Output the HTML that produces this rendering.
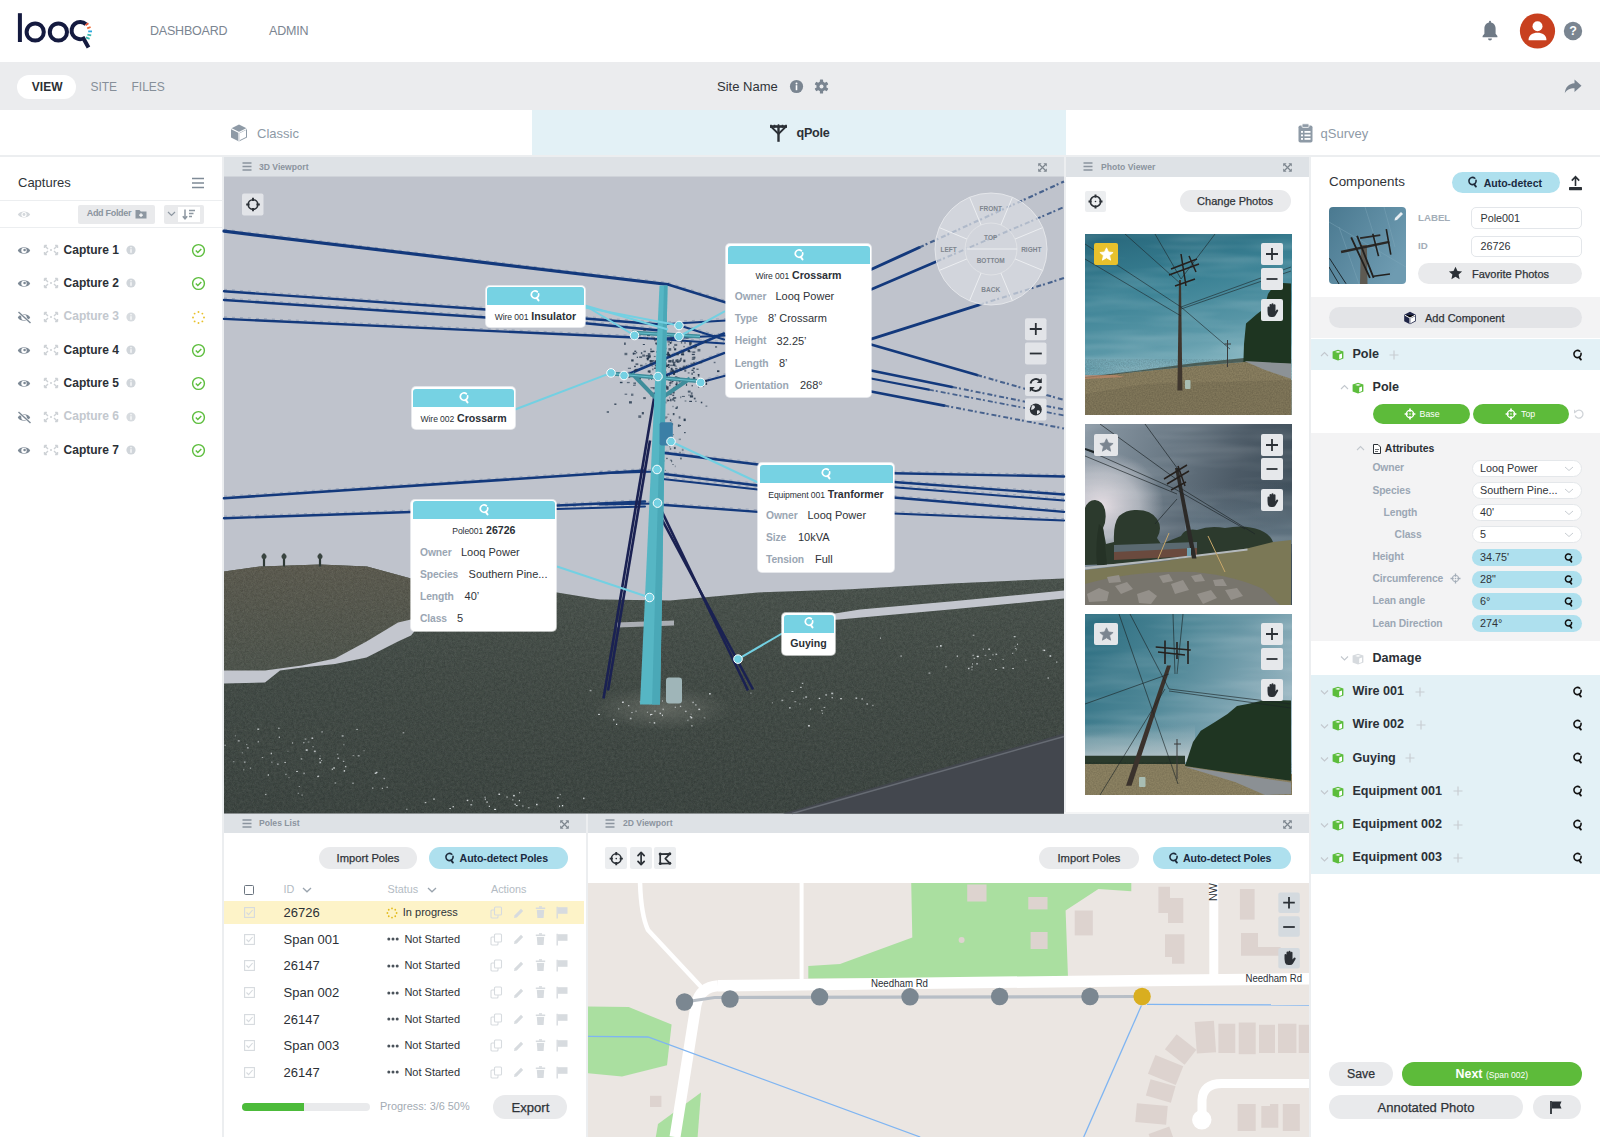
<!DOCTYPE html>
<html><head><meta charset="utf-8">
<style>
*{box-sizing:border-box;margin:0;padding:0}
html,body{width:1600px;height:1137px;overflow:hidden;background:#fff;font-family:"Liberation Sans",sans-serif;color:#2f3338}
.a{position:absolute}
.t{position:absolute;white-space:nowrap;line-height:1}
svg{position:absolute;overflow:visible}
</style></head>
<body>
<div class="a" style="left:0px;top:0px;width:1600px;height:62px;background:#fff;"></div>
<svg style="left:10px;top:8px;" width="90" height="45" viewBox="0 0 90 45">
<rect x="7.9" y="5.2" width="4" height="28.8" fill="#141a3f"/>
<circle cx="25.2" cy="24" r="8.6" fill="none" stroke="#141a3f" stroke-width="4"/>
<circle cx="48.4" cy="24" r="8.6" fill="none" stroke="#141a3f" stroke-width="4"/>
<path d="M76 16.2 A8.6 8.6 0 1 0 73.5 30.5 L78.5 39.5" fill="none" stroke="#141a3f" stroke-width="4"/>
<path d="M75.6 17.2 L78.4 15.2" stroke="#e8563a" stroke-width="1.8"/>
<path d="M77.2 20.4 L80.6 19" stroke="#f06a35" stroke-width="1.8"/>
<path d="M78.2 23.4 L82 23.4" stroke="#2aa7e0" stroke-width="1.8"/>
<path d="M77.4 26.6 L81.2 27.4" stroke="#3bb8b0" stroke-width="1.8"/>
<path d="M76 29.4 L79.6 30.8" stroke="#3bb8b0" stroke-width="1.8"/>
</svg>
<div class="t" style="left:150px;top:24.88px;font-size:12.5px;color:#7b8591;letter-spacing:-0.2px;">DASHBOARD</div>
<div class="t" style="left:269px;top:24.88px;font-size:12.5px;color:#7b8591;letter-spacing:-0.2px;">ADMIN</div>
<svg style="left:1480px;top:20px;" width="20" height="22" viewBox="0 0 20 22"><path d="M10 2.5c-3.6 0-5.6 2.7-5.6 6v5.2L2.6 16v1.2h14.8V16l-1.8-2.3V8.5c0-3.3-2-6-5.6-6z" fill="#6f7a86"/><path d="M8 18.6a2 2 0 0 0 4 0z" fill="#6f7a86"/><rect x="9" y="0.8" width="2" height="2.5" rx="1" fill="#6f7a86"/></svg>
<svg style="left:1519px;top:13px;" width="38" height="38" viewBox="0 0 38 38"><circle cx="18.5" cy="18" r="17.6" fill="#c8401f"/><circle cx="18.5" cy="13.2" r="5" fill="#fff"/><path d="M9.6 26.5c0-4.4 4-6.8 8.9-6.8s8.9 2.4 8.9 6.8v0.8H9.6z" fill="#fff"/></svg>
<svg style="left:1563px;top:21px;" width="20" height="20" viewBox="0 0 20 20"><circle cx="10" cy="10" r="9.2" fill="#7a8591"/><text x="10" y="14.3" font-family="Liberation Sans" font-weight="bold" font-size="12.5" fill="#fff" text-anchor="middle">?</text></svg>
<div class="a" style="left:0px;top:62px;width:1600px;height:48px;background:#ebecee;"></div>
<div class="a" style="left:17.4px;top:74.9px;width:59px;height:24px;background:#fff;border-radius:12px"></div>
<div class="t" style="left:31.8px;top:80.60px;font-size:12px;color:#2c3035;font-weight:bold;">VIEW</div>
<div class="t" style="left:90.4px;top:80.60px;font-size:12px;color:#868f99;">SITE</div>
<div class="t" style="left:131.5px;top:80.60px;font-size:12px;color:#868f99;">FILES</div>
<div class="t" style="left:717px;top:79.65px;font-size:13px;color:#2f3338;">Site Name</div>
<svg style="left:789px;top:79px;" width="15" height="15" viewBox="0 0 15 15"><circle cx="7.5" cy="7.5" r="6.6" fill="#7a8591"/><circle cx="7.5" cy="4.4" r="1" fill="#fff"/><rect x="6.7" y="6.2" width="1.6" height="5" fill="#fff"/></svg>
<svg style="left:813px;top:78px;" width="17" height="17" viewBox="0 0 17 17"><g transform="translate(8.5 8.5)" fill="#7a8591"><circle r="5"/><rect x="-1.6" y="-7" width="3.2" height="3.4" rx="0.6" transform="rotate(0)"/><rect x="-1.6" y="-7" width="3.2" height="3.4" rx="0.6" transform="rotate(60)"/><rect x="-1.6" y="-7" width="3.2" height="3.4" rx="0.6" transform="rotate(120)"/><rect x="-1.6" y="-7" width="3.2" height="3.4" rx="0.6" transform="rotate(180)"/><rect x="-1.6" y="-7" width="3.2" height="3.4" rx="0.6" transform="rotate(240)"/><rect x="-1.6" y="-7" width="3.2" height="3.4" rx="0.6" transform="rotate(300)"/><circle r="2" fill="#ebecee"/></g></svg>
<svg style="left:1563px;top:76px;" width="20" height="20" viewBox="0 0 20 20"><path d="M11.5 3.5 L18.5 9.8 L11.5 16 V12.2 C6.5 12.2 3.6 13.8 1.8 17.2 C2.4 11.2 5.6 7.6 11.5 7.2 Z" fill="#7a8591"/></svg>
<div class="a" style="left:0px;top:110px;width:1600px;height:45px;background:#fff;"></div>
<div class="a" style="left:532px;top:110px;width:534px;height:45px;background:#e3f1f6;"></div>
<svg style="left:229px;top:123px;" width="20" height="20" viewBox="0 0 20 20"><path d="M10 1.5 L18 5.5 V14.5 L10 18.5 L2 14.5 V5.5Z" fill="#8e9aa6"/><path d="M10 9.5 L18 5.5 M10 9.5 V18.5 M10 9.5 L2 5.5" stroke="#fff" stroke-width="1.2"/><path d="M10.6 10.3 L17 7.1 V14 L10.6 17.2Z" fill="#fff"/></svg>
<div class="t" style="left:257px;top:127.45px;font-size:13px;color:#8e9aa6;">Classic</div>
<svg style="left:768px;top:123px;" width="21" height="20" viewBox="0 0 21 20"><path d="M2 3.5 H19" stroke="#2b3036" stroke-width="2.6"/><path d="M3 1.8 v3 M6.5 1.8 v3 M14.5 1.8 v3 M18 1.8 v3 M10.5 1.2 v3" stroke="#2b3036" stroke-width="1.6"/><path d="M3.5 4 L10.5 11 L17.5 4" fill="none" stroke="#2b3036" stroke-width="1.8"/><path d="M10.5 3 V18.8" stroke="#2b3036" stroke-width="2.4"/></svg>
<div class="t" style="left:796.5px;top:126.79px;font-size:12.6px;color:#2b3036;font-weight:bold;letter-spacing:-0.25px;">qPole</div>
<svg style="left:1297px;top:123px;" width="17" height="20" viewBox="0 0 17 20"><rect x="1.5" y="2.5" width="14" height="17" rx="1.8" fill="#8e9aa6"/><rect x="5" y="0.8" width="7" height="3.6" rx="1" fill="#8e9aa6" stroke="#fff" stroke-width="0.8"/><g fill="#fff"><rect x="4" y="8" width="2" height="1.8"/><rect x="7.5" y="8" width="6" height="1.8"/><rect x="4" y="11.5" width="2" height="1.8"/><rect x="7.5" y="11.5" width="6" height="1.8"/><rect x="4" y="15" width="2" height="1.8"/><rect x="7.5" y="15" width="6" height="1.8"/></g></svg>
<div class="t" style="left:1320.5px;top:127.45px;font-size:13px;color:#8e9aa6;">qSurvey</div>
<div class="a" style="left:0px;top:155px;width:1600px;height:2px;background:#eceef0;"></div>
<div class="a" style="left:222px;top:155px;width:2px;height:982px;background:#eceef0;"></div>
<div class="t" style="left:18px;top:176.45px;font-size:13px;color:#2f3338;">Captures</div>
<svg style="left:191px;top:177px;" width="14" height="12" viewBox="0 0 14 12"><path d="M1 1.5H13M1 6H13M1 10.5H13" stroke="#7f8b97" stroke-width="1.6"/></svg>
<div class="a" style="left:0px;top:200px;width:222px;height:1px;background:#eceef0;"></div>
<svg style="left:17px;top:209px;" width="14" height="11" viewBox="0 0 14 11"><path d="M0.8 5.5 C3 1.5 11 1.5 13.2 5.5 C11 9.5 3 9.5 0.8 5.5Z" fill="#d3d7db"/><circle cx="7" cy="5.5" r="2.6" fill="#fff"/><circle cx="7" cy="5.5" r="1.4" fill="#d3d7db"/></svg>
<div class="a" style="left:78px;top:205px;width:77px;height:19px;background:#e9eaec;border-radius:2px"></div>
<div class="t" style="left:86.7px;top:209.35px;font-size:9px;color:#8a949e;font-weight:bold;letter-spacing:-0.3px;">Add Folder</div>
<svg style="left:135px;top:209px;" width="12" height="10" viewBox="0 0 12 10"><path d="M0.5 1 H4.5 L5.8 2.5 H11.5 V9.5 H0.5Z" fill="#8d97a1"/><path d="M6 4.2 V8 M4.1 6.1 H7.9" stroke="#fff" stroke-width="1.2"/></svg>
<div class="a" style="left:164.4px;top:205px;width:39.6px;height:19px;background:#e9eaec;border-radius:2px"></div>
<div class="a" style="left:177.6px;top:207.2px;width:22.2px;height:14.8px;background:#fff;"></div>
<svg style="left:167px;top:211px;" width="9" height="6" viewBox="0 0 9 6"><path d="M1 1 L4.5 4.5 L8 1" fill="none" stroke="#8d97a1" stroke-width="1.2"/></svg>
<svg style="left:182px;top:209px;" width="14" height="11" viewBox="0 0 14 11"><path d="M3 0.5 V9.5 M0.8 7.2 L3 9.8 L5.2 7.2" fill="none" stroke="#8d97a1" stroke-width="1.5"/><path d="M7 1.5 H13 M7 4.5 H11.5 M7 7.5 H10" stroke="#8d97a1" stroke-width="1.4"/></svg>
<div class="a" style="left:0px;top:227px;width:222px;height:1px;background:#eceef0;"></div>
<svg style="left:17px;top:245.0px;" width="14" height="11" viewBox="0 0 14 11"><path d="M0.8 5.5 C3 1.2 11 1.2 13.2 5.5 C11 9.8 3 9.8 0.8 5.5Z" fill="#7d8995"/><circle cx="7" cy="5.5" r="2.7" fill="#fff"/><circle cx="7.6" cy="5" r="1.3" fill="#7d8995"/></svg>
<svg style="left:43px;top:244.0px;" width="16" height="12" viewBox="0 0 16 12"><g stroke="#cdd1d5" stroke-width="1.4" fill="none"><path d="M1.5 1.5 L5 5 M14.5 1.5 L11 5 M1.5 10.5 L5 7 M14.5 10.5 L11 7"/><path d="M1.5 1.5 h2.4 M1.5 1.5 v2.4 M14.5 1.5 h-2.4 M14.5 1.5 v2.4 M1.5 10.5 h2.4 M1.5 10.5 v-2.4 M14.5 10.5 h-2.4 M14.5 10.5 v-2.4"/></g><circle cx="8" cy="6" r="1" fill="#cdd1d5"/></svg>
<div class="t" style="left:63.6px;top:243.70px;font-size:12px;color:#2b3036;font-weight:bold;">Capture 1</div>
<svg style="left:126px;top:245.0px;" width="10" height="10" viewBox="0 0 10 10"><circle cx="5" cy="5" r="4.6" fill="#d0d5da"/><rect x="4.4" y="4.2" width="1.2" height="3.6" fill="#fff"/><circle cx="5" cy="2.8" r="0.7" fill="#fff"/></svg>
<svg style="left:191px;top:243.0px;" width="15" height="15" viewBox="0 0 15 15"><circle cx="7.5" cy="7.5" r="5.9" fill="none" stroke="#5cbd3c" stroke-width="1.4"/><path d="M4.8 7.6 L6.8 9.6 L10.3 5.9" fill="none" stroke="#5cbd3c" stroke-width="1.4"/></svg>
<svg style="left:17px;top:278.3px;" width="14" height="11" viewBox="0 0 14 11"><path d="M0.8 5.5 C3 1.2 11 1.2 13.2 5.5 C11 9.8 3 9.8 0.8 5.5Z" fill="#7d8995"/><circle cx="7" cy="5.5" r="2.7" fill="#fff"/><circle cx="7.6" cy="5" r="1.3" fill="#7d8995"/></svg>
<svg style="left:43px;top:277.3px;" width="16" height="12" viewBox="0 0 16 12"><g stroke="#cdd1d5" stroke-width="1.4" fill="none"><path d="M1.5 1.5 L5 5 M14.5 1.5 L11 5 M1.5 10.5 L5 7 M14.5 10.5 L11 7"/><path d="M1.5 1.5 h2.4 M1.5 1.5 v2.4 M14.5 1.5 h-2.4 M14.5 1.5 v2.4 M1.5 10.5 h2.4 M1.5 10.5 v-2.4 M14.5 10.5 h-2.4 M14.5 10.5 v-2.4"/></g><circle cx="8" cy="6" r="1" fill="#cdd1d5"/></svg>
<div class="t" style="left:63.6px;top:277.00px;font-size:12px;color:#2b3036;font-weight:bold;">Capture 2</div>
<svg style="left:126px;top:278.3px;" width="10" height="10" viewBox="0 0 10 10"><circle cx="5" cy="5" r="4.6" fill="#d0d5da"/><rect x="4.4" y="4.2" width="1.2" height="3.6" fill="#fff"/><circle cx="5" cy="2.8" r="0.7" fill="#fff"/></svg>
<svg style="left:191px;top:276.3px;" width="15" height="15" viewBox="0 0 15 15"><circle cx="7.5" cy="7.5" r="5.9" fill="none" stroke="#5cbd3c" stroke-width="1.4"/><path d="M4.8 7.6 L6.8 9.6 L10.3 5.9" fill="none" stroke="#5cbd3c" stroke-width="1.4"/></svg>
<svg style="left:17px;top:310.6px;" width="15" height="13" viewBox="0 0 15 13"><path d="M0.8 6.5 C3 2.2 11 2.2 13.2 6.5 C11 10.8 3 10.8 0.8 6.5Z" fill="#7d8995"/><circle cx="7" cy="6.5" r="2.7" fill="#fff"/><path d="M1.5 1 L13.5 12" stroke="#fff" stroke-width="2.6"/><path d="M1.5 1 L13.5 12" stroke="#7d8995" stroke-width="1.4"/></svg>
<svg style="left:43px;top:310.6px;" width="16" height="12" viewBox="0 0 16 12"><g stroke="#cdd1d5" stroke-width="1.4" fill="none"><path d="M1.5 1.5 L5 5 M14.5 1.5 L11 5 M1.5 10.5 L5 7 M14.5 10.5 L11 7"/><path d="M1.5 1.5 h2.4 M1.5 1.5 v2.4 M14.5 1.5 h-2.4 M14.5 1.5 v2.4 M1.5 10.5 h2.4 M1.5 10.5 v-2.4 M14.5 10.5 h-2.4 M14.5 10.5 v-2.4"/></g><circle cx="8" cy="6" r="1" fill="#cdd1d5"/></svg>
<div class="t" style="left:63.6px;top:310.30px;font-size:12px;color:#c3c8ce;font-weight:bold;">Capture 3</div>
<svg style="left:126px;top:311.6px;" width="10" height="10" viewBox="0 0 10 10"><circle cx="5" cy="5" r="4.6" fill="#d7dbdf"/><rect x="4.4" y="4.2" width="1.2" height="3.6" fill="#fff"/><circle cx="5" cy="2.8" r="0.7" fill="#fff"/></svg>
<svg style="left:191px;top:309.6px;" width="15" height="15" viewBox="0 0 15 15"><circle cx="13.00" cy="7.50" r="0.95" fill="#e8c12c"/><circle cx="11.39" cy="11.39" r="0.95" fill="#e8c12c"/><circle cx="7.50" cy="13.00" r="0.95" fill="#e8c12c"/><circle cx="3.62" cy="11.39" r="0.95" fill="#e8c12c"/><circle cx="2.00" cy="7.51" r="0.95" fill="#e8c12c"/><circle cx="3.60" cy="3.62" r="0.95" fill="#e8c12c"/><circle cx="7.49" cy="2.00" r="0.95" fill="#e8c12c"/><circle cx="11.38" cy="3.60" r="0.95" fill="#e8c12c"/></svg>
<svg style="left:17px;top:344.9px;" width="14" height="11" viewBox="0 0 14 11"><path d="M0.8 5.5 C3 1.2 11 1.2 13.2 5.5 C11 9.8 3 9.8 0.8 5.5Z" fill="#7d8995"/><circle cx="7" cy="5.5" r="2.7" fill="#fff"/><circle cx="7.6" cy="5" r="1.3" fill="#7d8995"/></svg>
<svg style="left:43px;top:343.9px;" width="16" height="12" viewBox="0 0 16 12"><g stroke="#cdd1d5" stroke-width="1.4" fill="none"><path d="M1.5 1.5 L5 5 M14.5 1.5 L11 5 M1.5 10.5 L5 7 M14.5 10.5 L11 7"/><path d="M1.5 1.5 h2.4 M1.5 1.5 v2.4 M14.5 1.5 h-2.4 M14.5 1.5 v2.4 M1.5 10.5 h2.4 M1.5 10.5 v-2.4 M14.5 10.5 h-2.4 M14.5 10.5 v-2.4"/></g><circle cx="8" cy="6" r="1" fill="#cdd1d5"/></svg>
<div class="t" style="left:63.6px;top:343.60px;font-size:12px;color:#2b3036;font-weight:bold;">Capture 4</div>
<svg style="left:126px;top:344.9px;" width="10" height="10" viewBox="0 0 10 10"><circle cx="5" cy="5" r="4.6" fill="#d0d5da"/><rect x="4.4" y="4.2" width="1.2" height="3.6" fill="#fff"/><circle cx="5" cy="2.8" r="0.7" fill="#fff"/></svg>
<svg style="left:191px;top:342.9px;" width="15" height="15" viewBox="0 0 15 15"><circle cx="7.5" cy="7.5" r="5.9" fill="none" stroke="#5cbd3c" stroke-width="1.4"/><path d="M4.8 7.6 L6.8 9.6 L10.3 5.9" fill="none" stroke="#5cbd3c" stroke-width="1.4"/></svg>
<svg style="left:17px;top:378.2px;" width="14" height="11" viewBox="0 0 14 11"><path d="M0.8 5.5 C3 1.2 11 1.2 13.2 5.5 C11 9.8 3 9.8 0.8 5.5Z" fill="#7d8995"/><circle cx="7" cy="5.5" r="2.7" fill="#fff"/><circle cx="7.6" cy="5" r="1.3" fill="#7d8995"/></svg>
<svg style="left:43px;top:377.2px;" width="16" height="12" viewBox="0 0 16 12"><g stroke="#cdd1d5" stroke-width="1.4" fill="none"><path d="M1.5 1.5 L5 5 M14.5 1.5 L11 5 M1.5 10.5 L5 7 M14.5 10.5 L11 7"/><path d="M1.5 1.5 h2.4 M1.5 1.5 v2.4 M14.5 1.5 h-2.4 M14.5 1.5 v2.4 M1.5 10.5 h2.4 M1.5 10.5 v-2.4 M14.5 10.5 h-2.4 M14.5 10.5 v-2.4"/></g><circle cx="8" cy="6" r="1" fill="#cdd1d5"/></svg>
<div class="t" style="left:63.6px;top:376.90px;font-size:12px;color:#2b3036;font-weight:bold;">Capture 5</div>
<svg style="left:126px;top:378.2px;" width="10" height="10" viewBox="0 0 10 10"><circle cx="5" cy="5" r="4.6" fill="#d0d5da"/><rect x="4.4" y="4.2" width="1.2" height="3.6" fill="#fff"/><circle cx="5" cy="2.8" r="0.7" fill="#fff"/></svg>
<svg style="left:191px;top:376.2px;" width="15" height="15" viewBox="0 0 15 15"><circle cx="7.5" cy="7.5" r="5.9" fill="none" stroke="#5cbd3c" stroke-width="1.4"/><path d="M4.8 7.6 L6.8 9.6 L10.3 5.9" fill="none" stroke="#5cbd3c" stroke-width="1.4"/></svg>
<svg style="left:17px;top:410.5px;" width="15" height="13" viewBox="0 0 15 13"><path d="M0.8 6.5 C3 2.2 11 2.2 13.2 6.5 C11 10.8 3 10.8 0.8 6.5Z" fill="#7d8995"/><circle cx="7" cy="6.5" r="2.7" fill="#fff"/><path d="M1.5 1 L13.5 12" stroke="#fff" stroke-width="2.6"/><path d="M1.5 1 L13.5 12" stroke="#7d8995" stroke-width="1.4"/></svg>
<svg style="left:43px;top:410.5px;" width="16" height="12" viewBox="0 0 16 12"><g stroke="#cdd1d5" stroke-width="1.4" fill="none"><path d="M1.5 1.5 L5 5 M14.5 1.5 L11 5 M1.5 10.5 L5 7 M14.5 10.5 L11 7"/><path d="M1.5 1.5 h2.4 M1.5 1.5 v2.4 M14.5 1.5 h-2.4 M14.5 1.5 v2.4 M1.5 10.5 h2.4 M1.5 10.5 v-2.4 M14.5 10.5 h-2.4 M14.5 10.5 v-2.4"/></g><circle cx="8" cy="6" r="1" fill="#cdd1d5"/></svg>
<div class="t" style="left:63.6px;top:410.20px;font-size:12px;color:#c3c8ce;font-weight:bold;">Capture 6</div>
<svg style="left:126px;top:411.5px;" width="10" height="10" viewBox="0 0 10 10"><circle cx="5" cy="5" r="4.6" fill="#d7dbdf"/><rect x="4.4" y="4.2" width="1.2" height="3.6" fill="#fff"/><circle cx="5" cy="2.8" r="0.7" fill="#fff"/></svg>
<svg style="left:191px;top:409.5px;" width="15" height="15" viewBox="0 0 15 15"><circle cx="7.5" cy="7.5" r="5.9" fill="none" stroke="#5cbd3c" stroke-width="1.4"/><path d="M4.8 7.6 L6.8 9.6 L10.3 5.9" fill="none" stroke="#5cbd3c" stroke-width="1.4"/></svg>
<svg style="left:17px;top:444.79999999999995px;" width="14" height="11" viewBox="0 0 14 11"><path d="M0.8 5.5 C3 1.2 11 1.2 13.2 5.5 C11 9.8 3 9.8 0.8 5.5Z" fill="#7d8995"/><circle cx="7" cy="5.5" r="2.7" fill="#fff"/><circle cx="7.6" cy="5" r="1.3" fill="#7d8995"/></svg>
<svg style="left:43px;top:443.79999999999995px;" width="16" height="12" viewBox="0 0 16 12"><g stroke="#cdd1d5" stroke-width="1.4" fill="none"><path d="M1.5 1.5 L5 5 M14.5 1.5 L11 5 M1.5 10.5 L5 7 M14.5 10.5 L11 7"/><path d="M1.5 1.5 h2.4 M1.5 1.5 v2.4 M14.5 1.5 h-2.4 M14.5 1.5 v2.4 M1.5 10.5 h2.4 M1.5 10.5 v-2.4 M14.5 10.5 h-2.4 M14.5 10.5 v-2.4"/></g><circle cx="8" cy="6" r="1" fill="#cdd1d5"/></svg>
<div class="t" style="left:63.6px;top:443.50px;font-size:12px;color:#2b3036;font-weight:bold;">Capture 7</div>
<svg style="left:126px;top:444.79999999999995px;" width="10" height="10" viewBox="0 0 10 10"><circle cx="5" cy="5" r="4.6" fill="#d0d5da"/><rect x="4.4" y="4.2" width="1.2" height="3.6" fill="#fff"/><circle cx="5" cy="2.8" r="0.7" fill="#fff"/></svg>
<svg style="left:191px;top:442.79999999999995px;" width="15" height="15" viewBox="0 0 15 15"><circle cx="7.5" cy="7.5" r="5.9" fill="none" stroke="#5cbd3c" stroke-width="1.4"/><path d="M4.8 7.6 L6.8 9.6 L10.3 5.9" fill="none" stroke="#5cbd3c" stroke-width="1.4"/></svg>
<div class="a" style="left:224px;top:157px;width:840px;height:19.5px;background:#dee2e6;"></div>
<svg style="left:242px;top:162px;" width="10" height="9" viewBox="0 0 10 9"><path d="M0.5 1H9.5M0.5 4.5H9.5M0.5 8H9.5" stroke="#8b949e" stroke-width="1.3"/></svg>
<div class="t" style="left:259px;top:162.99px;font-size:8.6px;color:#8b949e;font-weight:bold;">3D Viewport</div>
<svg style="left:1037.5px;top:163px;" width="9" height="9" viewBox="0 0 9 9"><g stroke="#7d868f" stroke-width="1.2" fill="none"><path d="M1.5 1.5 L7.5 7.5 M7.5 1.5 L1.5 7.5"/></g><g fill="#7d868f"><path d="M0.2 0.2 h3.4 l-3.4 3.4z"/><path d="M8.8 0.2 h-3.4 l3.4 3.4z"/><path d="M0.2 8.8 h3.4 l-3.4 -3.4z"/><path d="M8.8 8.8 h-3.4 l3.4 -3.4z"/></g></svg>
<div class="a" style="left:1064px;top:155px;width:2px;height:658px;background:#eceef0;"></div>
<div class="a" style="left:1066px;top:157px;width:243px;height:19.5px;background:#dee2e6;"></div>
<svg style="left:1083px;top:162px;" width="10" height="9" viewBox="0 0 10 9"><path d="M0.5 1H9.5M0.5 4.5H9.5M0.5 8H9.5" stroke="#8b949e" stroke-width="1.3"/></svg>
<div class="t" style="left:1101px;top:162.99px;font-size:8.6px;color:#8b949e;font-weight:bold;">Photo Viewer</div>
<svg style="left:1282.5px;top:163px;" width="9" height="9" viewBox="0 0 9 9"><g stroke="#7d868f" stroke-width="1.2" fill="none"><path d="M1.5 1.5 L7.5 7.5 M7.5 1.5 L1.5 7.5"/></g><g fill="#7d868f"><path d="M0.2 0.2 h3.4 l-3.4 3.4z"/><path d="M8.8 0.2 h-3.4 l3.4 3.4z"/><path d="M0.2 8.8 h3.4 l-3.4 -3.4z"/><path d="M8.8 8.8 h-3.4 l3.4 -3.4z"/></g></svg>
<div class="a" style="left:1309px;top:155px;width:2px;height:982px;background:#eceef0;"></div>
<div class="a" style="left:224px;top:812px;width:1085px;height:1.5px;background:#f4f5f6;"></div>
<div class="a" style="left:224px;top:813.5px;width:362px;height:19.5px;background:#dee2e6;"></div>
<svg style="left:242px;top:818.5px;" width="10" height="9" viewBox="0 0 10 9"><path d="M0.5 1H9.5M0.5 4.5H9.5M0.5 8H9.5" stroke="#8b949e" stroke-width="1.3"/></svg>
<div class="t" style="left:259px;top:819.49px;font-size:8.6px;color:#8b949e;font-weight:bold;">Poles List</div>
<svg style="left:559.5px;top:819.5px;" width="9" height="9" viewBox="0 0 9 9"><g stroke="#7d868f" stroke-width="1.2" fill="none"><path d="M1.5 1.5 L7.5 7.5 M7.5 1.5 L1.5 7.5"/></g><g fill="#7d868f"><path d="M0.2 0.2 h3.4 l-3.4 3.4z"/><path d="M8.8 0.2 h-3.4 l3.4 3.4z"/><path d="M0.2 8.8 h3.4 l-3.4 -3.4z"/><path d="M8.8 8.8 h-3.4 l3.4 -3.4z"/></g></svg>
<div class="a" style="left:586px;top:812px;width:2px;height:325px;background:#eceef0;"></div>
<div class="a" style="left:588px;top:813.5px;width:721px;height:19.5px;background:#dee2e6;"></div>
<svg style="left:605px;top:818.5px;" width="10" height="9" viewBox="0 0 10 9"><path d="M0.5 1H9.5M0.5 4.5H9.5M0.5 8H9.5" stroke="#8b949e" stroke-width="1.3"/></svg>
<div class="t" style="left:623px;top:819.49px;font-size:8.6px;color:#8b949e;font-weight:bold;">2D Viewport</div>
<svg style="left:1282.5px;top:819.5px;" width="9" height="9" viewBox="0 0 9 9"><g stroke="#7d868f" stroke-width="1.2" fill="none"><path d="M1.5 1.5 L7.5 7.5 M7.5 1.5 L1.5 7.5"/></g><g fill="#7d868f"><path d="M0.2 0.2 h3.4 l-3.4 3.4z"/><path d="M8.8 0.2 h-3.4 l3.4 3.4z"/><path d="M0.2 8.8 h3.4 l-3.4 -3.4z"/><path d="M8.8 8.8 h-3.4 l3.4 -3.4z"/></g></svg>
<div class="a" style="left:1085px;top:190.7px;width:21px;height:21px;background:#eceef0;border-radius:2px"></div>
<svg style="left:1085px;top:190.7px;" width="21" height="21" viewBox="0 0 21 21"><circle cx="10.5" cy="10.5" r="5.2" fill="none" stroke="#2b3036" stroke-width="1.6"/><path d="M10.5 3.5 v3.2 M10.5 17.5 v-3.2 M3.5 10.5 h3.2 M17.5 10.5 h-3.2" stroke="#2b3036" stroke-width="1.9000000000000001"/><circle cx="10.5" cy="10.5" r="0.8" fill="#2b3036"/></svg>
<div class="a" style="left:1179.6px;top:190px;width:111px;height:21.5px;background:#e9eaec;border-radius:11px"></div>
<div class="t" style="left:1179.50px;width:111px;text-align:center;top:195.85px;font-size:11px;color:#2f3338;-webkit-text-stroke:0.25px currentColor">Change Photos</div>
<div class="t" style="left:1329px;top:175.21px;font-size:13.4px;color:#2f3338;">Components</div>
<div class="a" style="left:1452px;top:172px;width:108px;height:21px;background:#aee0ee;border-radius:11px"></div>
<svg style="left:1466px;top:175px;" width="14" height="14" viewBox="0 0 14 14"><path d="M10.05 5.37 A3.6 3.6 0 1 1 8.81 3.24" fill="none" stroke="#1d2a3a" stroke-width="1.6" stroke-linecap="round"/><path d="M8.12 9.24 L9.92 11.58" stroke="#1d2a3a" stroke-width="1.9000000000000001" stroke-linecap="round"/></svg>
<div class="t" style="left:1483.7px;top:177.57px;font-size:10.5px;color:#1a2a40;font-weight:bold;">Auto-detect</div>
<svg style="left:1567px;top:174px;" width="17" height="17" viewBox="0 0 17 17"><path d="M8.5 12 V3 M4.8 6.6 L8.5 2.6 L12.2 6.6" fill="none" stroke="#2b3036" stroke-width="1.6"/><rect x="2" y="13" width="13" height="3.2" rx="0.6" fill="#2b3036"/></svg>
<svg style="left:1329px;top:207px;" width="77" height="77" viewBox="0 0 77 77"><defs><linearGradient id="th" x1="0" y1="0" x2="1" y2="0.6"><stop offset="0" stop-color="#4a7990"/><stop offset="1" stop-color="#6e9bb1"/></linearGradient><clipPath id="thc"><rect width="77" height="77" rx="4"/></clipPath></defs>
<g clip-path="url(#thc)"><rect width="77" height="77" fill="url(#th)"/>
<path d="M36 0 L52 50 M55 0 L66 40 M0 15 L77 60 M30 77 L10 20" stroke="#82a9bc" stroke-width="0.6" opacity="0.7"/>
<path d="M0.5 51.3 L17 76.7 M0 60 L10 77" stroke="#1e2a30" stroke-width="1"/>
<path d="M31.9 37.9 L37.9 37.9 L38.5 77 L31 77Z" fill="#5e5a52"/>
<path d="M12.1 45 L60.3 34.9" stroke="#2a2826" stroke-width="2.4"/>
<path d="M31.1 31.1 L51.3 28.1" stroke="#2a2826" stroke-width="1.8"/>
<path d="M22.2 30.4 L40.9 70.8 M28.1 28.9 L44.6 70.8" stroke="#22201e" stroke-width="1.8"/>
<path d="M57.3 22.2 L61.8 47.6 M43.8 26.7 L49.5 49.1" stroke="#22201e" stroke-width="1.6"/>
<path d="M44.6 69.3 L61 67" stroke="#22201e" stroke-width="1.4"/>
<path d="M66 11 L72 5 L74 7 L68 13 L65.5 13.5Z" fill="#e8eef2"/>
</g></svg>
<div class="t" style="left:1418px;top:213.35px;font-size:9.7px;color:#a3adb8;font-weight:bold;">LABEL</div>
<div class="a" style="left:1471px;top:207.4px;width:111px;height:21.4px;background:#fff;border:1px solid #e3e6ea;border-radius:5px"></div>
<div class="t" style="left:1480.5px;top:212.82px;font-size:10.8px;color:#2f3338;">Pole001</div>
<div class="t" style="left:1418px;top:241.35px;font-size:9.7px;color:#a3adb8;font-weight:bold;">ID</div>
<div class="a" style="left:1471px;top:235.5px;width:111px;height:21.4px;background:#fff;border:1px solid #e3e6ea;border-radius:5px"></div>
<div class="t" style="left:1480.5px;top:240.82px;font-size:10.8px;color:#2f3338;">26726</div>
<div class="a" style="left:1418px;top:262.8px;width:164px;height:21.4px;background:#e9eaec;border-radius:11px"></div>
<svg style="left:1448px;top:266px;" width="15" height="14" viewBox="0 0 15 14"><path d="M7.5 0.8 L9.5 5 L14.1 5.5 L10.6 8.6 L11.6 13.2 L7.5 10.8 L3.4 13.2 L4.4 8.6 L0.9 5.5 L5.5 5Z" fill="#2b3036"/></svg>
<div class="t" style="left:1472px;top:268.65px;font-size:11px;color:#2f3338;-webkit-text-stroke:0.25px currentColor">Favorite Photos</div>
<div class="a" style="left:1311px;top:297.4px;width:289px;height:40.6px;background:#f3f3f4;"></div>
<div class="a" style="left:1329px;top:307px;width:253px;height:21.4px;background:#e3e4e7;border-radius:11px"></div>
<svg style="left:1403px;top:311px;" width="14" height="14" viewBox="0 0 14 14"><path d="M7 0.8 L12.8 3.8 V10.2 L7 13.2 L1.2 10.2 V3.8Z" fill="#1f2547"/><path d="M1.8 4.2 L7 7 L12.2 4.2 M7 7 V12.6" stroke="#fff" stroke-width="1"/><path d="M7.6 7.6 L12 5.2 V9.8 L7.6 12.2Z" fill="#fff"/></svg>
<div class="t" style="left:1425px;top:312.85px;font-size:11px;color:#2f3338;-webkit-text-stroke:0.25px currentColor">Add Component</div>
<div class="a" style="left:1311px;top:338.6px;width:289px;height:31.7px;background:#e3f1f6;"></div>
<svg style="left:1319.5px;top:351.2px;" width="9" height="7" viewBox="0 0 9 7"><path d="M1 5 L4.5 1.5 L8 5" fill="none" stroke="#c3c8ce" stroke-width="1.1"/></svg>
<svg style="left:1332px;top:348.7px;" width="12" height="12" viewBox="0 0 12 12"><g transform="scale(1.0)"><path d="M0.6 2.6 L6 0.8 L11.4 2.6 V9.4 L6 11.6 L0.6 9.4Z" fill="#5cbd3c"/><path d="M3.2 3 L6 2.1 L8.8 3 L6 3.8Z" fill="#fff"/><path d="M7.2 5.6 L10 4.6 V9 L7.2 10.2Z" fill="#fff"/></g></svg>
<div class="t" style="left:1352.4px;top:347.79px;font-size:12.6px;color:#2b3036;font-weight:bold;">Pole</div>
<svg style="left:1388.6px;top:350px;" width="10" height="10" viewBox="0 0 10 10"><path d="M5 0.5 V9.5 M0.5 5 H9.5" stroke="#c8cdd2" stroke-width="1.2"/></svg>
<svg style="left:1572px;top:349px;" width="12" height="12" viewBox="0 0 12 12"><path d="M9.05 4.37 A3.6 3.6 0 1 1 7.81 2.24" fill="none" stroke="#111" stroke-width="1.6" stroke-linecap="round"/><path d="M7.12 8.24 L8.92 10.58" stroke="#111" stroke-width="1.9000000000000001" stroke-linecap="round"/></svg>
<div class="a" style="left:1311px;top:370.3px;width:289px;height:62.3px;background:#fff;"></div>
<svg style="left:1339.5px;top:384.2px;" width="9" height="7" viewBox="0 0 9 7"><path d="M1 5 L4.5 1.5 L8 5" fill="none" stroke="#c3c8ce" stroke-width="1.1"/></svg>
<svg style="left:1352px;top:382.2px;" width="12" height="12" viewBox="0 0 12 12"><g transform="scale(1.0)"><path d="M0.6 2.6 L6 0.8 L11.4 2.6 V9.4 L6 11.6 L0.6 9.4Z" fill="#5cbd3c"/><path d="M3.2 3 L6 2.1 L8.8 3 L6 3.8Z" fill="#fff"/><path d="M7.2 5.6 L10 4.6 V9 L7.2 10.2Z" fill="#fff"/></g></svg>
<div class="t" style="left:1372.5px;top:380.89px;font-size:12.6px;color:#2b3036;font-weight:bold;">Pole</div>
<div class="a" style="left:1373.4px;top:404px;width:96.2px;height:19.7px;background:#5dbb3a;border-radius:10px"></div>
<svg style="left:1403px;top:407px;" width="14" height="14" viewBox="0 0 14 14"><circle cx="7" cy="7" r="3.6" fill="none" stroke="#fff" stroke-width="1.4"/><path d="M7 1.5999999999999999 v3.2 M7 12.4 v-3.2 M1.5999999999999999 7 h3.2 M12.4 7 h-3.2" stroke="#fff" stroke-width="1.7"/><circle cx="7" cy="7" r="0.8" fill="#fff"/></svg>
<div class="t" style="left:1419.6px;top:409.52px;font-size:8.8px;color:#fff;">Base</div>
<div class="a" style="left:1472.6px;top:404px;width:96.2px;height:19.7px;background:#5dbb3a;border-radius:10px"></div>
<svg style="left:1504px;top:407px;" width="14" height="14" viewBox="0 0 14 14"><circle cx="7" cy="7" r="3.6" fill="none" stroke="#fff" stroke-width="1.4"/><path d="M7 1.5999999999999999 v3.2 M7 12.4 v-3.2 M1.5999999999999999 7 h3.2 M12.4 7 h-3.2" stroke="#fff" stroke-width="1.7"/><circle cx="7" cy="7" r="0.8" fill="#fff"/></svg>
<div class="t" style="left:1521px;top:409.52px;font-size:8.8px;color:#fff;">Top</div>
<svg style="left:1573px;top:408px;" width="11" height="12" viewBox="0 0 11 12"><path d="M3 3.5 A4 4 0 1 1 2.2 7.5" fill="none" stroke="#d0d4d8" stroke-width="1.3"/><path d="M1 1.5 L3.6 4 L1 5.5Z" fill="#d0d4d8"/></svg>
<div class="a" style="left:1311px;top:432.6px;width:289px;height:208.4px;background:#f3f3f4;"></div>
<svg style="left:1355.5px;top:444.7px;" width="9" height="7" viewBox="0 0 9 7"><path d="M1 5 L4.5 1.5 L8 5" fill="none" stroke="#c3c8ce" stroke-width="1.1"/></svg>
<svg style="left:1372px;top:444px;" width="10" height="10" viewBox="0 0 10 10"><path d="M1.5 0.5 H6 L8.5 3 V9.5 H1.5Z" fill="#fff" stroke="#2b3036" stroke-width="1"/><path d="M3 5.5 H7 M3 7.5 H6" stroke="#2b3036" stroke-width="0.7"/></svg>
<div class="t" style="left:1384.8px;top:443.07px;font-size:10.5px;color:#2b3036;font-weight:bold;">Attributes</div>
<div class="t" style="left:1372.4px;top:463.44px;font-size:10.3px;color:#9ba7b4;font-weight:bold;letter-spacing:-0.1px;">Owner</div>
<div class="a" style="left:1471.7px;top:460.0px;width:110px;height:17px;background:#fff;border:1px solid #e4e7ea;border-radius:9px"></div>
<div class="t" style="left:1480px;top:463.02px;font-size:10.8px;color:#2f3338;">Looq Power</div>
<svg style="left:1564px;top:466.0px;" width="10" height="6" viewBox="0 0 10 6"><path d="M1 1 L5 4.5 L9 1" fill="none" stroke="#c8cdd2" stroke-width="1"/></svg>
<div class="t" style="left:1372.4px;top:485.59px;font-size:10.3px;color:#9ba7b4;font-weight:bold;letter-spacing:-0.1px;">Species</div>
<div class="a" style="left:1471.7px;top:482.15px;width:110px;height:17px;background:#fff;border:1px solid #e4e7ea;border-radius:9px"></div>
<div class="t" style="left:1480px;top:485.17px;font-size:10.8px;color:#2f3338;">Southern Pine...</div>
<svg style="left:1564px;top:488.15px;" width="10" height="6" viewBox="0 0 10 6"><path d="M1 1 L5 4.5 L9 1" fill="none" stroke="#c8cdd2" stroke-width="1"/></svg>
<div class="t" style="left:1383.6px;top:507.75px;font-size:10.3px;color:#9ba7b4;font-weight:bold;letter-spacing:-0.1px;">Length</div>
<div class="a" style="left:1471.7px;top:504.3px;width:110px;height:17px;background:#fff;border:1px solid #e4e7ea;border-radius:9px"></div>
<div class="t" style="left:1480px;top:507.32px;font-size:10.8px;color:#2f3338;">40'</div>
<svg style="left:1564px;top:510.3px;" width="10" height="6" viewBox="0 0 10 6"><path d="M1 1 L5 4.5 L9 1" fill="none" stroke="#c8cdd2" stroke-width="1"/></svg>
<div class="t" style="left:1394.6px;top:529.90px;font-size:10.3px;color:#9ba7b4;font-weight:bold;letter-spacing:-0.1px;">Class</div>
<div class="a" style="left:1471.7px;top:526.45px;width:110px;height:17px;background:#fff;border:1px solid #e4e7ea;border-radius:9px"></div>
<div class="t" style="left:1480px;top:529.47px;font-size:10.8px;color:#2f3338;">5</div>
<svg style="left:1564px;top:532.45px;" width="10" height="6" viewBox="0 0 10 6"><path d="M1 1 L5 4.5 L9 1" fill="none" stroke="#c8cdd2" stroke-width="1"/></svg>
<div class="t" style="left:1372.4px;top:552.05px;font-size:10.3px;color:#9ba7b4;font-weight:bold;letter-spacing:-0.1px;">Height</div>
<div class="a" style="left:1471.7px;top:548.6px;width:110px;height:17px;background:#aee0ee;border-radius:9px"></div>
<div class="t" style="left:1480px;top:551.62px;font-size:10.8px;color:#2f3338;">34.75'</div>
<svg style="left:1563px;top:551.6px;" width="12" height="12" viewBox="0 0 12 12"><path d="M8.55 4.46 A3.1 3.1 0 1 1 7.49 2.63" fill="none" stroke="#111" stroke-width="1.5" stroke-linecap="round"/><path d="M6.89 7.79 L8.45 9.80" stroke="#111" stroke-width="1.8" stroke-linecap="round"/></svg>
<div class="t" style="left:1372.4px;top:574.20px;font-size:10.3px;color:#9ba7b4;font-weight:bold;letter-spacing:-0.1px;">Circumference</div>
<div class="a" style="left:1471.7px;top:570.75px;width:110px;height:17px;background:#aee0ee;border-radius:9px"></div>
<div class="t" style="left:1480px;top:573.77px;font-size:10.8px;color:#2f3338;">28"</div>
<svg style="left:1563px;top:573.75px;" width="12" height="12" viewBox="0 0 12 12"><path d="M8.55 4.46 A3.1 3.1 0 1 1 7.49 2.63" fill="none" stroke="#111" stroke-width="1.5" stroke-linecap="round"/><path d="M6.89 7.79 L8.45 9.80" stroke="#111" stroke-width="1.8" stroke-linecap="round"/></svg>
<div class="t" style="left:1372.4px;top:596.35px;font-size:10.3px;color:#9ba7b4;font-weight:bold;letter-spacing:-0.1px;">Lean angle</div>
<div class="a" style="left:1471.7px;top:592.9px;width:110px;height:17px;background:#aee0ee;border-radius:9px"></div>
<div class="t" style="left:1480px;top:595.92px;font-size:10.8px;color:#2f3338;">6°</div>
<svg style="left:1563px;top:595.9px;" width="12" height="12" viewBox="0 0 12 12"><path d="M8.55 4.46 A3.1 3.1 0 1 1 7.49 2.63" fill="none" stroke="#111" stroke-width="1.5" stroke-linecap="round"/><path d="M6.89 7.79 L8.45 9.80" stroke="#111" stroke-width="1.8" stroke-linecap="round"/></svg>
<div class="t" style="left:1372.4px;top:618.50px;font-size:10.3px;color:#9ba7b4;font-weight:bold;letter-spacing:-0.1px;">Lean Direction</div>
<div class="a" style="left:1471.7px;top:615.05px;width:110px;height:17px;background:#aee0ee;border-radius:9px"></div>
<div class="t" style="left:1480px;top:618.07px;font-size:10.8px;color:#2f3338;">274°</div>
<svg style="left:1563px;top:618.05px;" width="12" height="12" viewBox="0 0 12 12"><path d="M8.55 4.46 A3.1 3.1 0 1 1 7.49 2.63" fill="none" stroke="#111" stroke-width="1.5" stroke-linecap="round"/><path d="M6.89 7.79 L8.45 9.80" stroke="#111" stroke-width="1.8" stroke-linecap="round"/></svg>
<svg style="left:1450px;top:573px;" width="11" height="11" viewBox="0 0 11 11"><circle cx="5.5" cy="5.5" r="3.2" fill="none" stroke="#a3adb8" stroke-width="1"/><path d="M5.5 0.4999999999999998 v3.2 M5.5 10.5 v-3.2 M0.4999999999999998 5.5 h3.2 M10.5 5.5 h-3.2" stroke="#a3adb8" stroke-width="1.3"/><circle cx="5.5" cy="5.5" r="0.8" fill="#a3adb8"/></svg>
<div class="a" style="left:1311px;top:641px;width:289px;height:34.4px;background:#fff;"></div>
<svg style="left:1339.5px;top:655.2px;" width="9" height="7" viewBox="0 0 9 7"><path d="M1 1.5 L4.5 5 L8 1.5" fill="none" stroke="#c3c8ce" stroke-width="1.1"/></svg>
<svg style="left:1352px;top:652.7px;" width="12" height="12" viewBox="0 0 12 12"><g transform="scale(1.0)"><path d="M0.6 2.6 L6 0.8 L11.4 2.6 V9.4 L6 11.6 L0.6 9.4Z" fill="#d6dade"/><path d="M3.2 3 L6 2.1 L8.8 3 L6 3.8Z" fill="#fff"/><path d="M7.2 5.6 L10 4.6 V9 L7.2 10.2Z" fill="#fff"/></g></svg>
<div class="t" style="left:1372.5px;top:651.89px;font-size:12.6px;color:#2b3036;font-weight:bold;">Damage</div>
<div class="a" style="left:1311px;top:675.4px;width:289px;height:199.1px;background:#e3f1f6;"></div>
<svg style="left:1319.5px;top:689.3000000000001px;" width="9" height="7" viewBox="0 0 9 7"><path d="M1 1.5 L4.5 5 L8 1.5" fill="none" stroke="#c3c8ce" stroke-width="1.1"/></svg>
<svg style="left:1332px;top:685.8000000000001px;" width="12" height="12" viewBox="0 0 12 12"><g transform="scale(1.0)"><path d="M0.6 2.6 L6 0.8 L11.4 2.6 V9.4 L6 11.6 L0.6 9.4Z" fill="#5cbd3c"/><path d="M3.2 3 L6 2.1 L8.8 3 L6 3.8Z" fill="#fff"/><path d="M7.2 5.6 L10 4.6 V9 L7.2 10.2Z" fill="#fff"/></g></svg>
<div class="t" style="left:1352.4px;top:685.19px;font-size:12.6px;color:#2b3036;font-weight:bold;">Wire 001</div>
<svg style="left:1415.2px;top:686.6px;" width="10" height="10" viewBox="0 0 10 10"><path d="M5 0.5 V9.5 M0.5 5 H9.5" stroke="#c8cdd2" stroke-width="1.2"/></svg>
<svg style="left:1572px;top:685.6px;" width="12" height="12" viewBox="0 0 12 12"><path d="M9.05 4.37 A3.6 3.6 0 1 1 7.81 2.24" fill="none" stroke="#111" stroke-width="1.6" stroke-linecap="round"/><path d="M7.12 8.24 L8.92 10.58" stroke="#111" stroke-width="1.9000000000000001" stroke-linecap="round"/></svg>
<svg style="left:1319.5px;top:722.5500000000001px;" width="9" height="7" viewBox="0 0 9 7"><path d="M1 1.5 L4.5 5 L8 1.5" fill="none" stroke="#c3c8ce" stroke-width="1.1"/></svg>
<svg style="left:1332px;top:719.0500000000001px;" width="12" height="12" viewBox="0 0 12 12"><g transform="scale(1.0)"><path d="M0.6 2.6 L6 0.8 L11.4 2.6 V9.4 L6 11.6 L0.6 9.4Z" fill="#5cbd3c"/><path d="M3.2 3 L6 2.1 L8.8 3 L6 3.8Z" fill="#fff"/><path d="M7.2 5.6 L10 4.6 V9 L7.2 10.2Z" fill="#fff"/></g></svg>
<div class="t" style="left:1352.4px;top:718.44px;font-size:12.6px;color:#2b3036;font-weight:bold;">Wire 002</div>
<svg style="left:1415.9px;top:719.85px;" width="10" height="10" viewBox="0 0 10 10"><path d="M5 0.5 V9.5 M0.5 5 H9.5" stroke="#c8cdd2" stroke-width="1.2"/></svg>
<svg style="left:1572px;top:718.85px;" width="12" height="12" viewBox="0 0 12 12"><path d="M9.05 4.37 A3.6 3.6 0 1 1 7.81 2.24" fill="none" stroke="#111" stroke-width="1.6" stroke-linecap="round"/><path d="M7.12 8.24 L8.92 10.58" stroke="#111" stroke-width="1.9000000000000001" stroke-linecap="round"/></svg>
<svg style="left:1319.5px;top:755.8000000000001px;" width="9" height="7" viewBox="0 0 9 7"><path d="M1 1.5 L4.5 5 L8 1.5" fill="none" stroke="#c3c8ce" stroke-width="1.1"/></svg>
<svg style="left:1332px;top:752.3000000000001px;" width="12" height="12" viewBox="0 0 12 12"><g transform="scale(1.0)"><path d="M0.6 2.6 L6 0.8 L11.4 2.6 V9.4 L6 11.6 L0.6 9.4Z" fill="#5cbd3c"/><path d="M3.2 3 L6 2.1 L8.8 3 L6 3.8Z" fill="#fff"/><path d="M7.2 5.6 L10 4.6 V9 L7.2 10.2Z" fill="#fff"/></g></svg>
<div class="t" style="left:1352.4px;top:751.69px;font-size:12.6px;color:#2b3036;font-weight:bold;">Guying</div>
<svg style="left:1404.9px;top:753.1px;" width="10" height="10" viewBox="0 0 10 10"><path d="M5 0.5 V9.5 M0.5 5 H9.5" stroke="#c8cdd2" stroke-width="1.2"/></svg>
<svg style="left:1572px;top:752.1px;" width="12" height="12" viewBox="0 0 12 12"><path d="M9.05 4.37 A3.6 3.6 0 1 1 7.81 2.24" fill="none" stroke="#111" stroke-width="1.6" stroke-linecap="round"/><path d="M7.12 8.24 L8.92 10.58" stroke="#111" stroke-width="1.9000000000000001" stroke-linecap="round"/></svg>
<svg style="left:1319.5px;top:789.0500000000001px;" width="9" height="7" viewBox="0 0 9 7"><path d="M1 1.5 L4.5 5 L8 1.5" fill="none" stroke="#c3c8ce" stroke-width="1.1"/></svg>
<svg style="left:1332px;top:785.5500000000001px;" width="12" height="12" viewBox="0 0 12 12"><g transform="scale(1.0)"><path d="M0.6 2.6 L6 0.8 L11.4 2.6 V9.4 L6 11.6 L0.6 9.4Z" fill="#5cbd3c"/><path d="M3.2 3 L6 2.1 L8.8 3 L6 3.8Z" fill="#fff"/><path d="M7.2 5.6 L10 4.6 V9 L7.2 10.2Z" fill="#fff"/></g></svg>
<div class="t" style="left:1352.4px;top:784.94px;font-size:12.6px;color:#2b3036;font-weight:bold;">Equipment 001</div>
<svg style="left:1452.9px;top:786.35px;" width="10" height="10" viewBox="0 0 10 10"><path d="M5 0.5 V9.5 M0.5 5 H9.5" stroke="#c8cdd2" stroke-width="1.2"/></svg>
<svg style="left:1572px;top:785.35px;" width="12" height="12" viewBox="0 0 12 12"><path d="M9.05 4.37 A3.6 3.6 0 1 1 7.81 2.24" fill="none" stroke="#111" stroke-width="1.6" stroke-linecap="round"/><path d="M7.12 8.24 L8.92 10.58" stroke="#111" stroke-width="1.9000000000000001" stroke-linecap="round"/></svg>
<svg style="left:1319.5px;top:822.3000000000001px;" width="9" height="7" viewBox="0 0 9 7"><path d="M1 1.5 L4.5 5 L8 1.5" fill="none" stroke="#c3c8ce" stroke-width="1.1"/></svg>
<svg style="left:1332px;top:818.8000000000001px;" width="12" height="12" viewBox="0 0 12 12"><g transform="scale(1.0)"><path d="M0.6 2.6 L6 0.8 L11.4 2.6 V9.4 L6 11.6 L0.6 9.4Z" fill="#5cbd3c"/><path d="M3.2 3 L6 2.1 L8.8 3 L6 3.8Z" fill="#fff"/><path d="M7.2 5.6 L10 4.6 V9 L7.2 10.2Z" fill="#fff"/></g></svg>
<div class="t" style="left:1352.4px;top:818.19px;font-size:12.6px;color:#2b3036;font-weight:bold;">Equipment 002</div>
<svg style="left:1452.9px;top:819.6px;" width="10" height="10" viewBox="0 0 10 10"><path d="M5 0.5 V9.5 M0.5 5 H9.5" stroke="#c8cdd2" stroke-width="1.2"/></svg>
<svg style="left:1572px;top:818.6px;" width="12" height="12" viewBox="0 0 12 12"><path d="M9.05 4.37 A3.6 3.6 0 1 1 7.81 2.24" fill="none" stroke="#111" stroke-width="1.6" stroke-linecap="round"/><path d="M7.12 8.24 L8.92 10.58" stroke="#111" stroke-width="1.9000000000000001" stroke-linecap="round"/></svg>
<svg style="left:1319.5px;top:855.5500000000001px;" width="9" height="7" viewBox="0 0 9 7"><path d="M1 1.5 L4.5 5 L8 1.5" fill="none" stroke="#c3c8ce" stroke-width="1.1"/></svg>
<svg style="left:1332px;top:852.0500000000001px;" width="12" height="12" viewBox="0 0 12 12"><g transform="scale(1.0)"><path d="M0.6 2.6 L6 0.8 L11.4 2.6 V9.4 L6 11.6 L0.6 9.4Z" fill="#5cbd3c"/><path d="M3.2 3 L6 2.1 L8.8 3 L6 3.8Z" fill="#fff"/><path d="M7.2 5.6 L10 4.6 V9 L7.2 10.2Z" fill="#fff"/></g></svg>
<div class="t" style="left:1352.4px;top:851.44px;font-size:12.6px;color:#2b3036;font-weight:bold;">Equipment 003</div>
<svg style="left:1452.9px;top:852.85px;" width="10" height="10" viewBox="0 0 10 10"><path d="M5 0.5 V9.5 M0.5 5 H9.5" stroke="#c8cdd2" stroke-width="1.2"/></svg>
<svg style="left:1572px;top:851.85px;" width="12" height="12" viewBox="0 0 12 12"><path d="M9.05 4.37 A3.6 3.6 0 1 1 7.81 2.24" fill="none" stroke="#111" stroke-width="1.6" stroke-linecap="round"/><path d="M7.12 8.24 L8.92 10.58" stroke="#111" stroke-width="1.9000000000000001" stroke-linecap="round"/></svg>
<div class="a" style="left:1329px;top:1061.5px;width:64px;height:24px;background:#e9eaec;border-radius:12px"></div>
<div class="t" style="left:1329.00px;width:64px;text-align:center;top:1068.14px;font-size:12.3px;color:#2f3338;-webkit-text-stroke:0.25px currentColor">Save</div>
<div class="a" style="left:1402px;top:1061.5px;width:179.6px;height:24px;background:#5dbb3a;border-radius:12px"></div>
<div class="t" style="left:1402px;top:1067.6px;width:179.6px;text-align:center;font-size:12.4px;color:#fff;font-weight:bold">Next <span style="font-size:8.5px;font-weight:normal">(Span 002)</span></div>
<div class="a" style="left:1329px;top:1095px;width:194px;height:24px;background:#e9eaec;border-radius:12px"></div>
<div class="t" style="left:1329.00px;width:194px;text-align:center;top:1100.95px;font-size:13px;color:#2f3338;-webkit-text-stroke:0.25px currentColor">Annotated Photo</div>
<div class="a" style="left:1533px;top:1095px;width:48px;height:24px;background:#e9eaec;border-radius:12px"></div>
<svg style="left:1549px;top:1100px;" width="15" height="15" viewBox="0 0 15 15"><path d="M2 1 V14" stroke="#2b3036" stroke-width="1.8"/><path d="M3 1.5 H12.5 L11 5 L12.5 8.5 H3Z" fill="#2b3036"/></svg>
<div class="a" style="left:318.7px;top:847.4px;width:98.7px;height:21.6px;background:#e9eaec;border-radius:11px"></div>
<div class="t" style="left:318.65px;width:98.7px;text-align:center;top:853.18px;font-size:11.2px;color:#2f3338;-webkit-text-stroke:0.25px currentColor">Import Poles</div>
<div class="a" style="left:429px;top:847.4px;width:138.5px;height:21.6px;background:#aee0ee;border-radius:11px"></div>
<svg style="left:443px;top:851px;" width="14" height="14" viewBox="0 0 14 14"><path d="M10.05 5.37 A3.6 3.6 0 1 1 8.81 3.24" fill="none" stroke="#1d2a3a" stroke-width="1.6" stroke-linecap="round"/><path d="M8.12 9.24 L9.92 11.58" stroke="#1d2a3a" stroke-width="1.9000000000000001" stroke-linecap="round"/></svg>
<div class="t" style="left:459.6px;top:852.99px;font-size:10.6px;color:#1a2a40;font-weight:bold;letter-spacing:-0.1px;">Auto-detect Poles</div>
<div class="a" style="left:244.2px;top:885px;width:10px;height:10px;background:#fff;border:1.2px solid #6b7580;border-radius:1.5px"></div>
<div class="t" style="left:283.5px;top:883.82px;font-size:10.8px;color:#b3bbc3;">ID</div>
<svg style="left:302px;top:887px;" width="10" height="6" viewBox="0 0 10 6"><path d="M1 1 L5 4.8 L9 1" fill="none" stroke="#9aa4ae" stroke-width="1.3"/></svg>
<div class="t" style="left:387.5px;top:883.82px;font-size:10.8px;color:#b3bbc3;">Status</div>
<svg style="left:427px;top:887px;" width="10" height="6" viewBox="0 0 10 6"><path d="M1 1 L5 4.8 L9 1" fill="none" stroke="#9aa4ae" stroke-width="1.3"/></svg>
<div class="t" style="left:491px;top:883.82px;font-size:10.8px;color:#b3bbc3;">Actions</div>
<div class="a" style="left:224px;top:901px;width:360.4px;height:23.2px;background:#fdf3c8;"></div>
<svg style="left:244px;top:907.2px;" width="11" height="11" viewBox="0 0 11 11"><rect x="0.6" y="0.6" width="9.8" height="9.8" fill="none" stroke="#d6dade" stroke-width="1.1"/><path d="M2.5 5.5 L4.6 7.6 L8.6 3" fill="none" stroke="#d6dade" stroke-width="1.1"/></svg>
<div class="t" style="left:283.5px;top:906.25px;font-size:13px;color:#2b3036;">26726</div>
<svg style="left:386px;top:906.7px;" width="12" height="12" viewBox="0 0 12 12"><circle cx="10.60" cy="6.00" r="0.9" fill="#e3bb1f"/><circle cx="9.25" cy="9.25" r="0.9" fill="#e3bb1f"/><circle cx="6.00" cy="10.60" r="0.9" fill="#e3bb1f"/><circle cx="2.75" cy="9.26" r="0.9" fill="#e3bb1f"/><circle cx="1.40" cy="6.01" r="0.9" fill="#e3bb1f"/><circle cx="2.74" cy="2.75" r="0.9" fill="#e3bb1f"/><circle cx="5.99" cy="1.40" r="0.9" fill="#e3bb1f"/><circle cx="9.24" cy="2.74" r="0.9" fill="#e3bb1f"/></svg>
<div class="t" style="left:402.8px;top:907.15px;font-size:11px;color:#2f3338;">In progress</div>
<svg style="left:490px;top:906.2px;" width="13" height="13" viewBox="0 0 13 13"><rect x="1" y="4" width="7" height="8" rx="1" fill="none" stroke="#d7dbdf" stroke-width="1.1"/><rect x="4.5" y="1" width="7" height="8" rx="1" fill="#fdf3c8" stroke="#d7dbdf" stroke-width="1.1"/></svg>
<svg style="left:512px;top:906.7px;" width="13" height="13" viewBox="0 0 13 13"><path d="M2 11 L2.6 8.2 L9 1.8 L11.2 4 L4.8 10.4Z" fill="#d7dbdf"/></svg>
<svg style="left:535px;top:906.2px;" width="11" height="13" viewBox="0 0 11 13"><rect x="0.8" y="1.5" width="9.4" height="1.6" fill="#d7dbdf"/><rect x="4" y="0.2" width="3" height="1.5" fill="#d7dbdf"/><path d="M1.8 4 H9.2 L8.6 12 H2.4Z" fill="#d7dbdf"/></svg>
<svg style="left:556px;top:906.2px;" width="13" height="13" viewBox="0 0 13 13"><path d="M1.2 0.8 V12.5" stroke="#d7dbdf" stroke-width="1.4"/><path d="M2 1.2 H11.5 V7.8 H2Z" fill="#d7dbdf"/></svg>
<svg style="left:244px;top:933.8000000000001px;" width="11" height="11" viewBox="0 0 11 11"><rect x="0.6" y="0.6" width="9.8" height="9.8" fill="none" stroke="#d6dade" stroke-width="1.1"/><path d="M2.5 5.5 L4.6 7.6 L8.6 3" fill="none" stroke="#d6dade" stroke-width="1.1"/></svg>
<div class="t" style="left:283.5px;top:932.85px;font-size:13px;color:#2b3036;">Span 001</div>
<svg style="left:387px;top:937.3000000000001px;" width="12" height="4" viewBox="0 0 12 4"><circle cx="1.8" cy="2" r="1.5" fill="#4a525a"/><circle cx="6" cy="2" r="1.5" fill="#4a525a"/><circle cx="10.2" cy="2" r="1.5" fill="#4a525a"/></svg>
<div class="t" style="left:404.4px;top:933.75px;font-size:11px;color:#2f3338;">Not Started</div>
<svg style="left:490px;top:932.8000000000001px;" width="13" height="13" viewBox="0 0 13 13"><rect x="1" y="4" width="7" height="8" rx="1" fill="none" stroke="#d7dbdf" stroke-width="1.1"/><rect x="4.5" y="1" width="7" height="8" rx="1" fill="#fff" stroke="#d7dbdf" stroke-width="1.1"/></svg>
<svg style="left:512px;top:933.3000000000001px;" width="13" height="13" viewBox="0 0 13 13"><path d="M2 11 L2.6 8.2 L9 1.8 L11.2 4 L4.8 10.4Z" fill="#d7dbdf"/></svg>
<svg style="left:535px;top:932.8000000000001px;" width="11" height="13" viewBox="0 0 11 13"><rect x="0.8" y="1.5" width="9.4" height="1.6" fill="#d7dbdf"/><rect x="4" y="0.2" width="3" height="1.5" fill="#d7dbdf"/><path d="M1.8 4 H9.2 L8.6 12 H2.4Z" fill="#d7dbdf"/></svg>
<svg style="left:556px;top:932.8000000000001px;" width="13" height="13" viewBox="0 0 13 13"><path d="M1.2 0.8 V12.5" stroke="#d7dbdf" stroke-width="1.4"/><path d="M2 1.2 H11.5 V7.8 H2Z" fill="#d7dbdf"/></svg>
<svg style="left:244px;top:960.4000000000001px;" width="11" height="11" viewBox="0 0 11 11"><rect x="0.6" y="0.6" width="9.8" height="9.8" fill="none" stroke="#d6dade" stroke-width="1.1"/><path d="M2.5 5.5 L4.6 7.6 L8.6 3" fill="none" stroke="#d6dade" stroke-width="1.1"/></svg>
<div class="t" style="left:283.5px;top:959.45px;font-size:13px;color:#2b3036;">26147</div>
<svg style="left:387px;top:963.9000000000001px;" width="12" height="4" viewBox="0 0 12 4"><circle cx="1.8" cy="2" r="1.5" fill="#4a525a"/><circle cx="6" cy="2" r="1.5" fill="#4a525a"/><circle cx="10.2" cy="2" r="1.5" fill="#4a525a"/></svg>
<div class="t" style="left:404.4px;top:960.35px;font-size:11px;color:#2f3338;">Not Started</div>
<svg style="left:490px;top:959.4000000000001px;" width="13" height="13" viewBox="0 0 13 13"><rect x="1" y="4" width="7" height="8" rx="1" fill="none" stroke="#d7dbdf" stroke-width="1.1"/><rect x="4.5" y="1" width="7" height="8" rx="1" fill="#fff" stroke="#d7dbdf" stroke-width="1.1"/></svg>
<svg style="left:512px;top:959.9000000000001px;" width="13" height="13" viewBox="0 0 13 13"><path d="M2 11 L2.6 8.2 L9 1.8 L11.2 4 L4.8 10.4Z" fill="#d7dbdf"/></svg>
<svg style="left:535px;top:959.4000000000001px;" width="11" height="13" viewBox="0 0 11 13"><rect x="0.8" y="1.5" width="9.4" height="1.6" fill="#d7dbdf"/><rect x="4" y="0.2" width="3" height="1.5" fill="#d7dbdf"/><path d="M1.8 4 H9.2 L8.6 12 H2.4Z" fill="#d7dbdf"/></svg>
<svg style="left:556px;top:959.4000000000001px;" width="13" height="13" viewBox="0 0 13 13"><path d="M1.2 0.8 V12.5" stroke="#d7dbdf" stroke-width="1.4"/><path d="M2 1.2 H11.5 V7.8 H2Z" fill="#d7dbdf"/></svg>
<svg style="left:244px;top:987.0px;" width="11" height="11" viewBox="0 0 11 11"><rect x="0.6" y="0.6" width="9.8" height="9.8" fill="none" stroke="#d6dade" stroke-width="1.1"/><path d="M2.5 5.5 L4.6 7.6 L8.6 3" fill="none" stroke="#d6dade" stroke-width="1.1"/></svg>
<div class="t" style="left:283.5px;top:986.05px;font-size:13px;color:#2b3036;">Span 002</div>
<svg style="left:387px;top:990.5px;" width="12" height="4" viewBox="0 0 12 4"><circle cx="1.8" cy="2" r="1.5" fill="#4a525a"/><circle cx="6" cy="2" r="1.5" fill="#4a525a"/><circle cx="10.2" cy="2" r="1.5" fill="#4a525a"/></svg>
<div class="t" style="left:404.4px;top:986.95px;font-size:11px;color:#2f3338;">Not Started</div>
<svg style="left:490px;top:986.0px;" width="13" height="13" viewBox="0 0 13 13"><rect x="1" y="4" width="7" height="8" rx="1" fill="none" stroke="#d7dbdf" stroke-width="1.1"/><rect x="4.5" y="1" width="7" height="8" rx="1" fill="#fff" stroke="#d7dbdf" stroke-width="1.1"/></svg>
<svg style="left:512px;top:986.5px;" width="13" height="13" viewBox="0 0 13 13"><path d="M2 11 L2.6 8.2 L9 1.8 L11.2 4 L4.8 10.4Z" fill="#d7dbdf"/></svg>
<svg style="left:535px;top:986.0px;" width="11" height="13" viewBox="0 0 11 13"><rect x="0.8" y="1.5" width="9.4" height="1.6" fill="#d7dbdf"/><rect x="4" y="0.2" width="3" height="1.5" fill="#d7dbdf"/><path d="M1.8 4 H9.2 L8.6 12 H2.4Z" fill="#d7dbdf"/></svg>
<svg style="left:556px;top:986.0px;" width="13" height="13" viewBox="0 0 13 13"><path d="M1.2 0.8 V12.5" stroke="#d7dbdf" stroke-width="1.4"/><path d="M2 1.2 H11.5 V7.8 H2Z" fill="#d7dbdf"/></svg>
<svg style="left:244px;top:1013.6px;" width="11" height="11" viewBox="0 0 11 11"><rect x="0.6" y="0.6" width="9.8" height="9.8" fill="none" stroke="#d6dade" stroke-width="1.1"/><path d="M2.5 5.5 L4.6 7.6 L8.6 3" fill="none" stroke="#d6dade" stroke-width="1.1"/></svg>
<div class="t" style="left:283.5px;top:1012.65px;font-size:13px;color:#2b3036;">26147</div>
<svg style="left:387px;top:1017.1px;" width="12" height="4" viewBox="0 0 12 4"><circle cx="1.8" cy="2" r="1.5" fill="#4a525a"/><circle cx="6" cy="2" r="1.5" fill="#4a525a"/><circle cx="10.2" cy="2" r="1.5" fill="#4a525a"/></svg>
<div class="t" style="left:404.4px;top:1013.55px;font-size:11px;color:#2f3338;">Not Started</div>
<svg style="left:490px;top:1012.6px;" width="13" height="13" viewBox="0 0 13 13"><rect x="1" y="4" width="7" height="8" rx="1" fill="none" stroke="#d7dbdf" stroke-width="1.1"/><rect x="4.5" y="1" width="7" height="8" rx="1" fill="#fff" stroke="#d7dbdf" stroke-width="1.1"/></svg>
<svg style="left:512px;top:1013.1px;" width="13" height="13" viewBox="0 0 13 13"><path d="M2 11 L2.6 8.2 L9 1.8 L11.2 4 L4.8 10.4Z" fill="#d7dbdf"/></svg>
<svg style="left:535px;top:1012.6px;" width="11" height="13" viewBox="0 0 11 13"><rect x="0.8" y="1.5" width="9.4" height="1.6" fill="#d7dbdf"/><rect x="4" y="0.2" width="3" height="1.5" fill="#d7dbdf"/><path d="M1.8 4 H9.2 L8.6 12 H2.4Z" fill="#d7dbdf"/></svg>
<svg style="left:556px;top:1012.6px;" width="13" height="13" viewBox="0 0 13 13"><path d="M1.2 0.8 V12.5" stroke="#d7dbdf" stroke-width="1.4"/><path d="M2 1.2 H11.5 V7.8 H2Z" fill="#d7dbdf"/></svg>
<svg style="left:244px;top:1040.2px;" width="11" height="11" viewBox="0 0 11 11"><rect x="0.6" y="0.6" width="9.8" height="9.8" fill="none" stroke="#d6dade" stroke-width="1.1"/><path d="M2.5 5.5 L4.6 7.6 L8.6 3" fill="none" stroke="#d6dade" stroke-width="1.1"/></svg>
<div class="t" style="left:283.5px;top:1039.25px;font-size:13px;color:#2b3036;">Span 003</div>
<svg style="left:387px;top:1043.7px;" width="12" height="4" viewBox="0 0 12 4"><circle cx="1.8" cy="2" r="1.5" fill="#4a525a"/><circle cx="6" cy="2" r="1.5" fill="#4a525a"/><circle cx="10.2" cy="2" r="1.5" fill="#4a525a"/></svg>
<div class="t" style="left:404.4px;top:1040.15px;font-size:11px;color:#2f3338;">Not Started</div>
<svg style="left:490px;top:1039.2px;" width="13" height="13" viewBox="0 0 13 13"><rect x="1" y="4" width="7" height="8" rx="1" fill="none" stroke="#d7dbdf" stroke-width="1.1"/><rect x="4.5" y="1" width="7" height="8" rx="1" fill="#fff" stroke="#d7dbdf" stroke-width="1.1"/></svg>
<svg style="left:512px;top:1039.7px;" width="13" height="13" viewBox="0 0 13 13"><path d="M2 11 L2.6 8.2 L9 1.8 L11.2 4 L4.8 10.4Z" fill="#d7dbdf"/></svg>
<svg style="left:535px;top:1039.2px;" width="11" height="13" viewBox="0 0 11 13"><rect x="0.8" y="1.5" width="9.4" height="1.6" fill="#d7dbdf"/><rect x="4" y="0.2" width="3" height="1.5" fill="#d7dbdf"/><path d="M1.8 4 H9.2 L8.6 12 H2.4Z" fill="#d7dbdf"/></svg>
<svg style="left:556px;top:1039.2px;" width="13" height="13" viewBox="0 0 13 13"><path d="M1.2 0.8 V12.5" stroke="#d7dbdf" stroke-width="1.4"/><path d="M2 1.2 H11.5 V7.8 H2Z" fill="#d7dbdf"/></svg>
<svg style="left:244px;top:1066.8000000000002px;" width="11" height="11" viewBox="0 0 11 11"><rect x="0.6" y="0.6" width="9.8" height="9.8" fill="none" stroke="#d6dade" stroke-width="1.1"/><path d="M2.5 5.5 L4.6 7.6 L8.6 3" fill="none" stroke="#d6dade" stroke-width="1.1"/></svg>
<div class="t" style="left:283.5px;top:1065.85px;font-size:13px;color:#2b3036;">26147</div>
<svg style="left:387px;top:1070.3000000000002px;" width="12" height="4" viewBox="0 0 12 4"><circle cx="1.8" cy="2" r="1.5" fill="#4a525a"/><circle cx="6" cy="2" r="1.5" fill="#4a525a"/><circle cx="10.2" cy="2" r="1.5" fill="#4a525a"/></svg>
<div class="t" style="left:404.4px;top:1066.75px;font-size:11px;color:#2f3338;">Not Started</div>
<svg style="left:490px;top:1065.8000000000002px;" width="13" height="13" viewBox="0 0 13 13"><rect x="1" y="4" width="7" height="8" rx="1" fill="none" stroke="#d7dbdf" stroke-width="1.1"/><rect x="4.5" y="1" width="7" height="8" rx="1" fill="#fff" stroke="#d7dbdf" stroke-width="1.1"/></svg>
<svg style="left:512px;top:1066.3000000000002px;" width="13" height="13" viewBox="0 0 13 13"><path d="M2 11 L2.6 8.2 L9 1.8 L11.2 4 L4.8 10.4Z" fill="#d7dbdf"/></svg>
<svg style="left:535px;top:1065.8000000000002px;" width="11" height="13" viewBox="0 0 11 13"><rect x="0.8" y="1.5" width="9.4" height="1.6" fill="#d7dbdf"/><rect x="4" y="0.2" width="3" height="1.5" fill="#d7dbdf"/><path d="M1.8 4 H9.2 L8.6 12 H2.4Z" fill="#d7dbdf"/></svg>
<svg style="left:556px;top:1065.8000000000002px;" width="13" height="13" viewBox="0 0 13 13"><path d="M1.2 0.8 V12.5" stroke="#d7dbdf" stroke-width="1.4"/><path d="M2 1.2 H11.5 V7.8 H2Z" fill="#d7dbdf"/></svg>
<div class="a" style="left:242.4px;top:1103px;width:128px;height:8.3px;background:#e9eaec;border-radius:4px"></div>
<div class="a" style="left:242.4px;top:1103px;width:62px;height:8.3px;background:#4cbb3a;border-radius:4px 0 0 4px"></div>
<div class="t" style="left:380px;top:1100.73px;font-size:10.9px;color:#a3abb3;">Progress: 3/6 50%</div>
<div class="a" style="left:493.3px;top:1095.4px;width:74.2px;height:23.3px;background:#e9eaec;border-radius:12px"></div>
<div class="t" style="left:493.40px;width:74px;text-align:center;top:1101.16px;font-size:13.1px;color:#2f3338;-webkit-text-stroke:0.25px currentColor">Export</div>
<div class="a" style="left:588px;top:833px;width:721px;height:50px;background:#fff;"></div>
<div class="a" style="left:605.4px;top:847px;width:21.5px;height:21.8px;background:#eceef0;border-radius:2px"></div>
<div class="a" style="left:630px;top:847px;width:21.5px;height:21.8px;background:#eceef0;border-radius:2px"></div>
<div class="a" style="left:654px;top:847px;width:21.5px;height:21.8px;background:#eceef0;border-radius:2px"></div>
<svg style="left:605.4px;top:847px;" width="22" height="22" viewBox="0 0 22 22"><circle cx="11.25" cy="11.6" r="4.8" fill="none" stroke="#2b3036" stroke-width="1.6"/><path d="M11.25 5.0 v3.2 M11.25 18.2 v-3.2 M4.65 11.6 h3.2 M17.85 11.6 h-3.2" stroke="#2b3036" stroke-width="1.9000000000000001"/><circle cx="11.25" cy="11.6" r="0.8" fill="#2b3036"/></svg>
<svg style="left:630px;top:847px;" width="22" height="22" viewBox="0 0 22 22"><path d="M11.1 6 V17" stroke="#2b3036" stroke-width="1.7"/><path d="M8 8.6 L11.1 5.3 L14.2 8.6 M8 14.4 L11.1 17.7 L14.2 14.4" fill="none" stroke="#2b3036" stroke-width="1.7" stroke-linejoin="round" stroke-linecap="round"/></svg>
<svg style="left:654px;top:847px;" width="22" height="22" viewBox="0 0 22 22"><path d="M6.2 7.1 L15.8 6.8 L11.3 11.6 L15.8 16.3 L6.2 16.6Z" fill="none" stroke="#2b3036" stroke-width="1.7" stroke-linejoin="round"/><g fill="#2b3036"><circle cx="6.2" cy="7.1" r="1.5"/><circle cx="15.8" cy="6.8" r="1.5"/><circle cx="15.8" cy="16.3" r="1.5"/><circle cx="6.2" cy="16.6" r="1.5"/></g></svg>
<div class="a" style="left:1039px;top:847px;width:99.7px;height:21.7px;background:#e9eaec;border-radius:11px"></div>
<div class="t" style="left:1039.05px;width:99.7px;text-align:center;top:853.18px;font-size:11.2px;color:#2f3338;-webkit-text-stroke:0.25px currentColor">Import Poles</div>
<div class="a" style="left:1152.6px;top:847px;width:138.4px;height:21.7px;background:#aee0ee;border-radius:11px"></div>
<svg style="left:1166.5px;top:851px;" width="14" height="14" viewBox="0 0 14 14"><path d="M10.05 5.37 A3.6 3.6 0 1 1 8.81 3.24" fill="none" stroke="#1d2a3a" stroke-width="1.6" stroke-linecap="round"/><path d="M8.12 9.24 L9.92 11.58" stroke="#1d2a3a" stroke-width="1.9000000000000001" stroke-linecap="round"/></svg>
<div class="t" style="left:1183px;top:852.99px;font-size:10.6px;color:#1a2a40;font-weight:bold;letter-spacing:-0.1px;">Auto-detect Poles</div>
<svg style="left:224px;top:176.5px" width="840" height="636" viewBox="224 176.5 840 636">
<defs>
<filter id="nz" x="0" y="0" width="100%" height="100%"><feTurbulence type="fractalNoise" baseFrequency="0.9" numOctaves="2" seed="3"/><feColorMatrix values="0 0 0 0 0  0 0 0 0 0  0 0 0 0 0  0 0 0 0.55 -0.12"/><feComposite in2="SourceGraphic" operator="in"/></filter>
<filter id="nz2" x="0" y="0" width="100%" height="100%"><feTurbulence type="fractalNoise" baseFrequency="0.35" numOctaves="3" seed="8"/><feColorMatrix values="0 0 0 0 0.45  0 0 0 0 0.47  0 0 0 0 0.42  0 0 0 0.5 -0.1"/><feComposite in2="SourceGraphic" operator="in"/></filter>
<linearGradient id="gg" x1="0" y1="0" x2="0" y2="1"><stop offset="0" stop-color="#4c554f"/><stop offset="0.45" stop-color="#434c47"/><stop offset="1" stop-color="#3c4541"/></linearGradient>
<linearGradient id="hill" x1="0" y1="0" x2="0" y2="1"><stop offset="0" stop-color="#5f5d51"/><stop offset="1" stop-color="#4f564e"/></linearGradient>
</defs>
<rect x="224" y="176" width="840" height="637" fill="#bfc3cc"/>
<polygon points="224,571 260,566 320,564 367,566 411,578 480,585 557,592 600,599 670,600 758,592 846,589 951,583 1064,578 1064,813 224,813" fill="url(#gg)"/>
<polygon points="224,571 260,566 320,564 367,566 411,578 480,585 557,593 520,600 470,605 411,621 398,624 366.5,643 335,660 302,667 265,671 224,671" fill="url(#hill)"/>
<clipPath id="gclip"><polygon points="224,571 260,566 320,564 367,566 411,578 480,585 557,592 600,599 670,600 758,592 846,589 951,583 1064,578 1064,813 224,813"/></clipPath>
<g clip-path="url(#gclip)"><rect x="224" y="560" width="840" height="253" fill="#000" filter="url(#nz)" opacity="0.5"/><rect x="224" y="560" width="840" height="253" fill="#fff" filter="url(#nz2)" opacity="0.35"/></g>
<polygon points="224,670 265,670 302,665 335,658 366.5,641 398,622 411,619 430,612 411,635 398,641 366.5,657 335,663.5 302,667 280,670 265,682 224,683" fill="#c3c6ce"/>
<polygon points="835,613 860,609 950,601 1064,590 1064,598 950,609 839,619 780,623" fill="#c3c6ce"/>
<polygon points="617,622 674,620 674,625 617,627" fill="#c3c6ce" opacity="0.8"/>
<radialGradient id="base" cx="0.5" cy="0.5" r="0.5"><stop offset="0" stop-color="#7d8078" stop-opacity="0.55"/><stop offset="1" stop-color="#7d8078" stop-opacity="0"/></radialGradient>
<ellipse cx="662" cy="708" rx="70" ry="22" fill="url(#base)"/>
<polygon points="783,813 1064,733 1064,813" fill="#43474e"/>
<path d="M792 813 L1064 736" stroke="#666b73" stroke-width="1.5"/>

<rect x="334.6" y="781.9" width="1.6" height="1.2" fill="#e8ecef" opacity="0.60"/><rect x="321.4" y="730.8" width="1.4" height="1.2" fill="#e8ecef" opacity="0.61"/><rect x="342.8" y="760.3" width="1.5" height="0.9" fill="#e8ecef" opacity="0.86"/><rect x="303.6" y="772.1" width="0.9" height="1.6" fill="#e8ecef" opacity="0.83"/><rect x="343.5" y="743.7" width="0.8" height="1.1" fill="#e8ecef" opacity="0.72"/><rect x="381.8" y="787.3" width="1.2" height="0.9" fill="#e8ecef" opacity="0.87"/><rect x="372.1" y="787.0" width="1.3" height="1.2" fill="#e8ecef" opacity="0.65"/><rect x="271.5" y="761.0" width="0.8" height="1.5" fill="#e8ecef" opacity="0.61"/><rect x="305.7" y="748.8" width="2.0" height="1.5" fill="#e8ecef" opacity="0.84"/><rect x="304.7" y="738.1" width="1.7" height="0.9" fill="#e8ecef" opacity="0.71"/><rect x="313.9" y="750.1" width="1.9" height="1.5" fill="#e8ecef" opacity="0.68"/><rect x="267.7" y="773.7" width="1.3" height="1.6" fill="#e8ecef" opacity="0.67"/><rect x="319.4" y="761.2" width="1.7" height="1.6" fill="#e8ecef" opacity="0.72"/><rect x="243.9" y="761.1" width="1.7" height="1.0" fill="#e8ecef" opacity="0.77"/><rect x="241.8" y="751.9" width="1.0" height="0.9" fill="#e8ecef" opacity="0.66"/><rect x="336.8" y="753.2" width="1.5" height="1.0" fill="#e8ecef" opacity="0.55"/><rect x="374.6" y="772.2" width="1.7" height="1.1" fill="#e8ecef" opacity="0.81"/><rect x="257.3" y="728.1" width="1.9" height="1.1" fill="#e8ecef" opacity="0.95"/><rect x="357.7" y="754.7" width="1.9" height="1.2" fill="#e8ecef" opacity="0.67"/><rect x="301.6" y="794.1" width="1.0" height="0.9" fill="#e8ecef" opacity="0.86"/><rect x="307.6" y="741.1" width="1.8" height="0.8" fill="#e8ecef" opacity="0.62"/><rect x="288.5" y="776.8" width="1.0" height="0.9" fill="#e8ecef" opacity="0.65"/><rect x="402.6" y="731.7" width="1.7" height="1.2" fill="#e8ecef" opacity="0.61"/><rect x="352.5" y="754.8" width="1.7" height="0.8" fill="#e8ecef" opacity="0.60"/><rect x="341.7" y="734.8" width="1.9" height="1.3" fill="#e8ecef" opacity="0.69"/><rect x="224.5" y="744.2" width="1.2" height="1.2" fill="#e8ecef" opacity="0.62"/><rect x="300.7" y="757.6" width="1.6" height="1.6" fill="#e8ecef" opacity="0.51"/><rect x="246.9" y="746.7" width="1.8" height="1.3" fill="#e8ecef" opacity="0.62"/><rect x="319.7" y="755.0" width="0.9" height="0.9" fill="#e8ecef" opacity="0.51"/><rect x="276.9" y="763.0" width="1.8" height="1.3" fill="#e8ecef" opacity="0.56"/><rect x="261.8" y="756.5" width="1.4" height="1.0" fill="#e8ecef" opacity="0.57"/><rect x="317.5" y="774.9" width="1.7" height="1.2" fill="#e8ecef" opacity="0.52"/><rect x="278.0" y="727.1" width="1.7" height="1.4" fill="#e8ecef" opacity="0.50"/><rect x="284.3" y="761.4" width="1.7" height="0.9" fill="#e8ecef" opacity="0.82"/><rect x="298.7" y="785.7" width="1.2" height="0.8" fill="#e8ecef" opacity="0.67"/><rect x="265.2" y="793.4" width="1.2" height="1.2" fill="#e8ecef" opacity="0.75"/><rect x="319.2" y="757.6" width="1.5" height="1.2" fill="#e8ecef" opacity="0.83"/><rect x="337.5" y="757.1" width="1.6" height="1.2" fill="#e8ecef" opacity="0.75"/><rect x="375.2" y="771.9" width="2.0" height="1.1" fill="#e8ecef" opacity="0.64"/><rect x="321.2" y="759.7" width="0.9" height="0.9" fill="#e8ecef" opacity="0.87"/><rect x="303.0" y="741.9" width="1.5" height="0.8" fill="#e8ecef" opacity="0.79"/><rect x="249.8" y="767.1" width="1.3" height="1.1" fill="#e8ecef" opacity="0.60"/><rect x="345.2" y="765.4" width="1.1" height="1.4" fill="#e8ecef" opacity="0.87"/><rect x="292.0" y="741.9" width="1.1" height="1.1" fill="#e8ecef" opacity="0.72"/><rect x="343.7" y="769.7" width="1.4" height="1.4" fill="#e8ecef" opacity="0.90"/><rect x="311.5" y="737.0" width="1.7" height="1.3" fill="#e8ecef" opacity="0.89"/><rect x="278.8" y="736.0" width="1.1" height="1.5" fill="#e8ecef" opacity="0.67"/><rect x="237.7" y="739.5" width="2.0" height="1.6" fill="#e8ecef" opacity="0.50"/><rect x="285.3" y="773.3" width="1.3" height="0.9" fill="#e8ecef" opacity="0.75"/><rect x="333.1" y="766.8" width="1.9" height="1.4" fill="#e8ecef" opacity="0.71"/><rect x="386.4" y="786.2" width="1.6" height="1.0" fill="#e8ecef" opacity="0.65"/><rect x="257.7" y="740.4" width="1.1" height="1.6" fill="#e8ecef" opacity="0.64"/><rect x="297.7" y="792.2" width="1.0" height="1.3" fill="#e8ecef" opacity="0.59"/><rect x="270.7" y="752.2" width="1.3" height="1.6" fill="#e8ecef" opacity="0.71"/><rect x="243.2" y="768.9" width="1.1" height="0.9" fill="#e8ecef" opacity="0.67"/><rect x="296.0" y="770.7" width="2.0" height="0.8" fill="#e8ecef" opacity="0.86"/><rect x="363.7" y="749.6" width="0.8" height="1.2" fill="#e8ecef" opacity="0.52"/><rect x="246.2" y="743.8" width="1.1" height="0.8" fill="#e8ecef" opacity="0.74"/><rect x="331.7" y="768.0" width="1.3" height="1.5" fill="#e8ecef" opacity="0.67"/><rect x="352.1" y="782.1" width="1.8" height="1.2" fill="#e8ecef" opacity="0.52"/><rect x="317.3" y="775.6" width="1.5" height="1.0" fill="#e8ecef" opacity="0.86"/><rect x="356.1" y="728.4" width="1.9" height="0.8" fill="#e8ecef" opacity="0.76"/><rect x="383.4" y="777.3" width="1.7" height="1.4" fill="#e8ecef" opacity="0.58"/><rect x="376.0" y="771.2" width="1.5" height="1.3" fill="#e8ecef" opacity="0.71"/><rect x="312.5" y="745.6" width="1.1" height="1.1" fill="#e8ecef" opacity="0.63"/><rect x="234.8" y="734.9" width="0.9" height="0.9" fill="#e8ecef" opacity="0.73"/><rect x="287.4" y="750.3" width="1.1" height="0.8" fill="#e8ecef" opacity="0.52"/><rect x="232.9" y="760.8" width="1.6" height="0.9" fill="#e8ecef" opacity="0.55"/><rect x="1043.9" y="649.2" width="1.3" height="1.4" fill="#e8ecef" opacity="0.83"/><rect x="984.5" y="654.3" width="1.8" height="1.0" fill="#e8ecef" opacity="0.52"/><rect x="971.3" y="666.0" width="1.6" height="0.9" fill="#e8ecef" opacity="0.82"/><rect x="976.9" y="655.3" width="1.8" height="1.4" fill="#e8ecef" opacity="0.91"/><rect x="988.3" y="648.0" width="1.7" height="1.5" fill="#e8ecef" opacity="0.74"/><rect x="928.5" y="671.9" width="1.9" height="1.4" fill="#e8ecef" opacity="0.51"/><rect x="968.0" y="667.3" width="1.5" height="1.4" fill="#e8ecef" opacity="0.79"/><rect x="1047.5" y="676.8" width="1.4" height="1.5" fill="#e8ecef" opacity="0.59"/><rect x="1049.5" y="654.8" width="1.7" height="1.4" fill="#e8ecef" opacity="0.90"/><rect x="989.5" y="658.5" width="1.3" height="0.9" fill="#e8ecef" opacity="0.74"/><rect x="1014.6" y="645.3" width="1.0" height="0.8" fill="#e8ecef" opacity="0.69"/><rect x="992.1" y="653.8" width="1.6" height="1.0" fill="#e8ecef" opacity="0.55"/><rect x="1042.5" y="649.1" width="1.9" height="1.2" fill="#e8ecef" opacity="0.56"/><rect x="1002.6" y="666.7" width="1.6" height="1.4" fill="#e8ecef" opacity="0.84"/><rect x="982.7" y="648.1" width="1.3" height="1.1" fill="#e8ecef" opacity="0.72"/><rect x="995.3" y="668.7" width="1.4" height="0.8" fill="#e8ecef" opacity="0.87"/><rect x="940.0" y="644.7" width="1.7" height="1.4" fill="#e8ecef" opacity="0.95"/><rect x="972.2" y="662.8" width="0.8" height="1.3" fill="#e8ecef" opacity="0.76"/><rect x="880.0" y="637.1" width="1.0" height="1.0" fill="#e8ecef" opacity="0.83"/><rect x="1017.1" y="643.2" width="0.9" height="1.1" fill="#e8ecef" opacity="0.87"/><rect x="956.7" y="655.0" width="1.3" height="1.3" fill="#e8ecef" opacity="0.77"/><rect x="972.7" y="634.2" width="1.7" height="1.1" fill="#e8ecef" opacity="0.61"/><rect x="1013.7" y="635.7" width="1.9" height="1.0" fill="#e8ecef" opacity="0.88"/><rect x="1012.1" y="652.2" width="1.2" height="1.3" fill="#e8ecef" opacity="0.57"/><rect x="1014.9" y="647.4" width="1.6" height="1.0" fill="#e8ecef" opacity="0.60"/><rect x="1012.2" y="667.6" width="1.7" height="1.0" fill="#e8ecef" opacity="0.81"/><rect x="971.3" y="668.8" width="1.2" height="1.0" fill="#e8ecef" opacity="0.56"/><rect x="1056.1" y="661.1" width="1.3" height="0.9" fill="#e8ecef" opacity="0.90"/><rect x="995.5" y="653.1" width="1.7" height="1.3" fill="#e8ecef" opacity="0.70"/><rect x="900.5" y="654.9" width="1.2" height="1.3" fill="#e8ecef" opacity="0.79"/><rect x="976.2" y="662.7" width="1.7" height="1.3" fill="#e8ecef" opacity="0.71"/><rect x="972.4" y="654.3" width="1.7" height="0.8" fill="#e8ecef" opacity="0.79"/><rect x="973.6" y="657.2" width="1.5" height="1.3" fill="#e8ecef" opacity="0.54"/><rect x="976.7" y="655.4" width="1.8" height="1.1" fill="#e8ecef" opacity="0.65"/><rect x="1002.6" y="658.4" width="1.0" height="0.9" fill="#e8ecef" opacity="0.78"/><rect x="1015.8" y="648.6" width="0.9" height="1.2" fill="#e8ecef" opacity="0.55"/><rect x="945.5" y="665.5" width="1.0" height="1.4" fill="#e8ecef" opacity="0.74"/><rect x="1025.0" y="659.2" width="1.5" height="0.9" fill="#e8ecef" opacity="0.59"/><rect x="936.4" y="645.5" width="1.4" height="1.3" fill="#e8ecef" opacity="0.50"/><rect x="650.5" y="713.4" width="1.9" height="1.1" fill="#e8ecef" opacity="0.85"/><rect x="698.3" y="708.2" width="1.9" height="1.4" fill="#e8ecef" opacity="0.76"/><rect x="691.5" y="724.5" width="0.9" height="1.6" fill="#e8ecef" opacity="0.85"/><rect x="652.2" y="695.3" width="1.0" height="1.1" fill="#e8ecef" opacity="0.80"/><rect x="641.6" y="698.7" width="1.8" height="0.8" fill="#e8ecef" opacity="0.63"/><rect x="684.9" y="710.2" width="1.8" height="1.4" fill="#e8ecef" opacity="0.57"/><rect x="654.2" y="710.0" width="1.6" height="1.2" fill="#e8ecef" opacity="0.60"/><rect x="613.1" y="718.6" width="1.3" height="1.4" fill="#e8ecef" opacity="0.78"/><rect x="618.1" y="707.9" width="1.2" height="1.0" fill="#e8ecef" opacity="0.72"/><rect x="650.0" y="713.5" width="1.0" height="1.5" fill="#e8ecef" opacity="0.69"/><rect x="662.6" y="708.1" width="1.1" height="1.5" fill="#e8ecef" opacity="0.65"/><rect x="648.0" y="700.4" width="1.6" height="1.2" fill="#e8ecef" opacity="0.83"/><rect x="628.2" y="704.5" width="1.1" height="1.3" fill="#e8ecef" opacity="0.87"/><rect x="646.3" y="696.5" width="1.2" height="1.5" fill="#e8ecef" opacity="0.88"/><rect x="690.6" y="716.6" width="1.7" height="1.3" fill="#e8ecef" opacity="0.93"/><rect x="678.2" y="701.4" width="2.0" height="1.1" fill="#e8ecef" opacity="0.67"/><rect x="679.9" y="705.2" width="1.3" height="1.3" fill="#e8ecef" opacity="0.62"/><rect x="653.7" y="721.7" width="1.5" height="1.4" fill="#e8ecef" opacity="0.86"/><rect x="709.0" y="692.5" width="1.8" height="1.6" fill="#e8ecef" opacity="0.72"/><rect x="648.0" y="695.8" width="2.0" height="1.3" fill="#e8ecef" opacity="0.69"/><rect x="645.7" y="699.6" width="1.0" height="1.1" fill="#e8ecef" opacity="0.56"/><rect x="674.7" y="706.1" width="1.3" height="1.4" fill="#e8ecef" opacity="0.52"/><rect x="649.4" y="702.7" width="1.4" height="1.0" fill="#e8ecef" opacity="0.70"/><rect x="651.8" y="697.1" width="1.3" height="1.4" fill="#e8ecef" opacity="0.55"/><rect x="629.8" y="717.2" width="1.8" height="1.6" fill="#e8ecef" opacity="0.62"/><rect x="639.6" y="700.6" width="1.6" height="1.5" fill="#e8ecef" opacity="0.56"/><rect x="616.0" y="723.2" width="1.2" height="1.3" fill="#e8ecef" opacity="0.87"/><rect x="649.5" y="721.3" width="0.8" height="1.1" fill="#e8ecef" opacity="0.58"/><rect x="646.9" y="711.1" width="0.8" height="1.4" fill="#e8ecef" opacity="0.58"/><rect x="622.0" y="701.0" width="1.8" height="1.5" fill="#e8ecef" opacity="0.78"/><rect x="687.5" y="719.1" width="0.9" height="1.5" fill="#e8ecef" opacity="0.64"/><rect x="659.6" y="712.2" width="1.3" height="1.4" fill="#e8ecef" opacity="0.88"/><rect x="658.7" y="691.6" width="1.1" height="1.1" fill="#e8ecef" opacity="0.64"/><rect x="598.0" y="713.4" width="2.0" height="0.9" fill="#e8ecef" opacity="0.93"/><rect x="692.3" y="701.2" width="1.6" height="1.4" fill="#e8ecef" opacity="0.58"/><rect x="589.6" y="689.3" width="1.9" height="1.5" fill="#e8ecef" opacity="0.54"/><rect x="651.5" y="696.0" width="1.9" height="0.9" fill="#e8ecef" opacity="0.75"/><rect x="703.7" y="717.0" width="1.7" height="0.8" fill="#e8ecef" opacity="0.64"/><rect x="689.8" y="715.8" width="1.6" height="0.9" fill="#e8ecef" opacity="0.93"/><rect x="695.1" y="703.9" width="1.5" height="1.1" fill="#e8ecef" opacity="0.77"/><rect x="631.1" y="711.7" width="1.7" height="0.9" fill="#e8ecef" opacity="0.63"/><rect x="662.0" y="699.7" width="0.9" height="1.5" fill="#e8ecef" opacity="0.57"/><rect x="635.5" y="710.1" width="1.1" height="1.1" fill="#e8ecef" opacity="0.74"/><rect x="690.7" y="713.3" width="0.9" height="0.9" fill="#e8ecef" opacity="0.59"/><rect x="661.9" y="714.1" width="1.1" height="1.5" fill="#e8ecef" opacity="0.80"/><rect x="424.7" y="801.6" width="1.6" height="1.1" fill="#e8ecef" opacity="0.78"/><rect x="498.4" y="793.1" width="1.7" height="1.3" fill="#e8ecef" opacity="0.92"/><rect x="494.1" y="808.3" width="2.0" height="1.2" fill="#e8ecef" opacity="0.91"/><rect x="559.0" y="805.0" width="1.1" height="1.4" fill="#e8ecef" opacity="0.69"/><rect x="467.2" y="799.1" width="1.1" height="1.5" fill="#e8ecef" opacity="0.79"/><rect x="484.8" y="798.0" width="1.2" height="1.6" fill="#e8ecef" opacity="0.59"/><rect x="433.3" y="798.0" width="1.4" height="1.2" fill="#e8ecef" opacity="0.94"/><rect x="506.4" y="796.0" width="1.3" height="1.1" fill="#e8ecef" opacity="0.81"/><rect x="484.3" y="796.2" width="1.6" height="1.1" fill="#e8ecef" opacity="0.51"/><rect x="488.8" y="805.2" width="1.0" height="1.3" fill="#e8ecef" opacity="0.95"/><rect x="556.9" y="796.7" width="1.8" height="1.2" fill="#e8ecef" opacity="0.76"/><rect x="512.2" y="798.8" width="1.2" height="1.1" fill="#e8ecef" opacity="0.65"/><rect x="486.3" y="800.8" width="1.6" height="1.6" fill="#e8ecef" opacity="0.61"/><rect x="515.8" y="804.6" width="1.8" height="1.0" fill="#e8ecef" opacity="0.85"/><rect x="527.9" y="806.6" width="1.7" height="1.3" fill="#e8ecef" opacity="0.54"/><rect x="583.1" y="797.1" width="1.4" height="1.5" fill="#e8ecef" opacity="0.77"/><rect x="521.9" y="804.9" width="1.8" height="1.2" fill="#e8ecef" opacity="0.52"/><rect x="514.4" y="803.1" width="1.5" height="1.3" fill="#e8ecef" opacity="0.70"/><rect x="406.2" y="808.1" width="1.2" height="1.3" fill="#e8ecef" opacity="0.59"/><rect x="472.1" y="799.7" width="0.9" height="1.1" fill="#e8ecef" opacity="0.55"/><rect x="452.5" y="805.5" width="1.5" height="1.4" fill="#e8ecef" opacity="0.71"/><rect x="561.9" y="804.5" width="1.3" height="1.4" fill="#e8ecef" opacity="0.94"/><rect x="466.6" y="799.4" width="1.2" height="1.2" fill="#e8ecef" opacity="0.64"/><rect x="536.0" y="803.3" width="1.6" height="1.5" fill="#e8ecef" opacity="0.84"/><rect x="559.6" y="793.4" width="1.3" height="1.3" fill="#e8ecef" opacity="0.52"/><rect x="519.0" y="791.6" width="1.1" height="1.2" fill="#e8ecef" opacity="0.62"/><rect x="513.1" y="794.4" width="1.7" height="1.5" fill="#e8ecef" opacity="0.85"/><rect x="470.3" y="803.5" width="1.9" height="1.5" fill="#e8ecef" opacity="0.59"/><rect x="449.3" y="807.5" width="1.7" height="1.0" fill="#e8ecef" opacity="0.70"/><rect x="518.8" y="799.4" width="1.1" height="1.3" fill="#e8ecef" opacity="0.91"/><rect x="855.5" y="696.9" width="1.7" height="1.6" fill="#e8ecef" opacity="0.65"/><rect x="823.6" y="706.4" width="1.7" height="0.9" fill="#e8ecef" opacity="0.75"/><rect x="840.2" y="697.6" width="1.6" height="1.2" fill="#e8ecef" opacity="0.93"/><rect x="781.4" y="699.2" width="1.9" height="1.4" fill="#e8ecef" opacity="0.57"/><rect x="831.2" y="692.1" width="2.0" height="1.6" fill="#e8ecef" opacity="0.72"/><rect x="799.3" y="703.0" width="1.1" height="1.0" fill="#e8ecef" opacity="0.58"/><rect x="818.7" y="697.3" width="1.5" height="1.3" fill="#e8ecef" opacity="0.83"/><rect x="750.4" y="692.2" width="1.1" height="0.9" fill="#e8ecef" opacity="0.76"/><rect x="808.0" y="724.6" width="1.9" height="1.4" fill="#e8ecef" opacity="0.88"/><rect x="821.3" y="709.6" width="1.3" height="1.1" fill="#e8ecef" opacity="0.67"/><rect x="771.9" y="701.7" width="0.8" height="1.2" fill="#e8ecef" opacity="0.56"/><rect x="861.4" y="697.9" width="1.5" height="1.1" fill="#e8ecef" opacity="0.82"/><rect x="801.8" y="682.3" width="1.5" height="1.0" fill="#e8ecef" opacity="0.78"/><rect x="872.3" y="704.3" width="1.2" height="1.4" fill="#e8ecef" opacity="0.56"/><rect x="803.4" y="697.1" width="0.8" height="1.0" fill="#e8ecef" opacity="0.88"/><rect x="789.0" y="706.5" width="1.7" height="1.6" fill="#e8ecef" opacity="0.62"/><rect x="800.0" y="686.3" width="1.8" height="1.1" fill="#e8ecef" opacity="0.71"/><rect x="825.4" y="693.8" width="1.4" height="1.3" fill="#e8ecef" opacity="0.88"/><rect x="821.9" y="712.3" width="1.1" height="0.9" fill="#e8ecef" opacity="0.71"/><rect x="791.5" y="690.5" width="1.9" height="0.9" fill="#e8ecef" opacity="0.74"/><rect x="794.4" y="700.8" width="1.9" height="0.9" fill="#e8ecef" opacity="0.62"/><rect x="866.4" y="703.0" width="1.6" height="1.0" fill="#e8ecef" opacity="0.91"/><rect x="805.2" y="695.8" width="1.9" height="1.5" fill="#e8ecef" opacity="0.64"/><rect x="831.6" y="696.7" width="1.2" height="1.1" fill="#e8ecef" opacity="0.93"/><rect x="810.1" y="707.8" width="1.0" height="1.5" fill="#e8ecef" opacity="0.58"/><path d="M264 566 V553" stroke="#2f3a36" stroke-width="2.2"/><circle cx="264" cy="556" r="2.5" fill="#3a4540"/><path d="M284 566 V553" stroke="#2f3a36" stroke-width="2.2"/><circle cx="284" cy="556" r="2.5" fill="#3a4540"/><path d="M320 566 V553" stroke="#2f3a36" stroke-width="2.2"/><circle cx="320" cy="556" r="2.5" fill="#3a4540"/><path d="M224 230.7 L668 284" stroke="#13397c" stroke-width="3.2" stroke-linecap="round"/><path d="M224 228.7 L668 282" stroke="#2d4a7a" stroke-width="0.8" opacity="0.35" stroke-dasharray="3 5"/><path d="M668 284 L726 302" stroke="#13397c" stroke-width="2.6" stroke-linecap="round"/><path d="M668 282 L726 300" stroke="#2d4a7a" stroke-width="0.8" opacity="0.35" stroke-dasharray="3 5"/><path d="M224 290.8 L486 309" stroke="#13397c" stroke-width="2.4" stroke-linecap="round"/><path d="M224 288.8 L486 307" stroke="#2d4a7a" stroke-width="0.8" opacity="0.35" stroke-dasharray="3 5"/><path d="M585 318 L660 324" stroke="#13397c" stroke-width="2.4" stroke-linecap="round"/><path d="M585 316 L660 322" stroke="#2d4a7a" stroke-width="0.8" opacity="0.35" stroke-dasharray="3 5"/><path d="M224 299.5 L486 317" stroke="#13397c" stroke-width="2.4" stroke-linecap="round"/><path d="M224 297.5 L486 315" stroke="#2d4a7a" stroke-width="0.8" opacity="0.35" stroke-dasharray="3 5"/><path d="M585 322.7 L660 330" stroke="#13397c" stroke-width="2.4" stroke-linecap="round"/><path d="M585 320.7 L660 328" stroke="#2d4a7a" stroke-width="0.8" opacity="0.35" stroke-dasharray="3 5"/><path d="M224 318.4 L635 337" stroke="#13397c" stroke-width="2.4" stroke-linecap="round"/><path d="M224 316.4 L635 335" stroke="#2d4a7a" stroke-width="0.8" opacity="0.35" stroke-dasharray="3 5"/><path d="M660 324 L726 320" stroke="#13397c" stroke-width="2.2" stroke-linecap="round"/><path d="M660 322 L726 318" stroke="#2d4a7a" stroke-width="0.8" opacity="0.35" stroke-dasharray="3 5"/><path d="M662 338 L726 335" stroke="#13397c" stroke-width="2.2" stroke-linecap="round"/><path d="M662 336 L726 333" stroke="#2d4a7a" stroke-width="0.8" opacity="0.35" stroke-dasharray="3 5"/><path d="M627.7 374 L724 333" stroke="#13397c" stroke-width="2.6" stroke-linecap="round"/><path d="M627.7 372 L724 331" stroke="#2d4a7a" stroke-width="0.8" opacity="0.35" stroke-dasharray="3 5"/><path d="M664 375.5 L724 352.6" stroke="#13397c" stroke-width="2.6" stroke-linecap="round"/><path d="M664 373.5 L724 350.6" stroke="#2d4a7a" stroke-width="0.8" opacity="0.35" stroke-dasharray="3 5"/><path d="M675.6 323.8 L724 339" stroke="#13397c" stroke-width="2.2" stroke-linecap="round"/><path d="M675.6 321.8 L724 337" stroke="#2d4a7a" stroke-width="0.8" opacity="0.35" stroke-dasharray="3 5"/><path d="M635 337 L724 343" stroke="#13397c" stroke-width="2.2" stroke-linecap="round"/><path d="M635 335 L724 341" stroke="#2d4a7a" stroke-width="0.8" opacity="0.35" stroke-dasharray="3 5"/><path d="M700 382 L726 375" stroke="#13397c" stroke-width="2" stroke-linecap="round"/><path d="M700 380 L726 373" stroke="#2d4a7a" stroke-width="0.8" opacity="0.35" stroke-dasharray="3 5"/><path d="M224 497.7 L645 470" stroke="#13397c" stroke-width="2.6" stroke-linecap="round"/><path d="M224 495.7 L645 468" stroke="#2d4a7a" stroke-width="0.8" opacity="0.35" stroke-dasharray="3 5"/><path d="M224 517.7 L411 511.5" stroke="#13397c" stroke-width="2.4" stroke-linecap="round"/><path d="M224 515.7 L411 509.5" stroke="#2d4a7a" stroke-width="0.8" opacity="0.35" stroke-dasharray="3 5"/><path d="M557 505 L645 501" stroke="#13397c" stroke-width="2.4" stroke-linecap="round"/><path d="M557 503 L645 499" stroke="#2d4a7a" stroke-width="0.8" opacity="0.35" stroke-dasharray="3 5"/><path d="M557 508.5 L645 506" stroke="#13397c" stroke-width="2" stroke-linecap="round"/><path d="M557 506.5 L645 504" stroke="#2d4a7a" stroke-width="0.8" opacity="0.35" stroke-dasharray="3 5"/><path d="M600 472.7 L658 471" stroke="#13397c" stroke-width="2.2" stroke-linecap="round"/><path d="M600 470.7 L658 469" stroke="#2d4a7a" stroke-width="0.8" opacity="0.35" stroke-dasharray="3 5"/><path d="M600 504 L658 503" stroke="#13397c" stroke-width="2.2" stroke-linecap="round"/><path d="M600 502 L658 501" stroke="#2d4a7a" stroke-width="0.8" opacity="0.35" stroke-dasharray="3 5"/><path d="M658 451.6 L758 464" stroke="#13397c" stroke-width="2.6" stroke-linecap="round"/><path d="M658 449.6 L758 462" stroke="#2d4a7a" stroke-width="0.8" opacity="0.35" stroke-dasharray="3 5"/><path d="M893.5 472.7 L1064 476" stroke="#13397c" stroke-width="2.4" stroke-linecap="round"/><path d="M893.5 470.7 L1064 474" stroke="#2d4a7a" stroke-width="0.8" opacity="0.35" stroke-dasharray="3 5"/><path d="M658 472.7 L758 485" stroke="#13397c" stroke-width="2.4" stroke-linecap="round"/><path d="M658 470.7 L758 483" stroke="#2d4a7a" stroke-width="0.8" opacity="0.35" stroke-dasharray="3 5"/><path d="M893.5 481.5 L1064 494" stroke="#13397c" stroke-width="2.4" stroke-linecap="round"/><path d="M893.5 479.5 L1064 492" stroke="#2d4a7a" stroke-width="0.8" opacity="0.35" stroke-dasharray="3 5"/><path d="M658 478 L758 489" stroke="#13397c" stroke-width="2" stroke-linecap="round"/><path d="M658 476 L758 487" stroke="#2d4a7a" stroke-width="0.8" opacity="0.35" stroke-dasharray="3 5"/><path d="M893.5 486.8 L1064 500" stroke="#13397c" stroke-width="2" stroke-linecap="round"/><path d="M893.5 484.8 L1064 498" stroke="#2d4a7a" stroke-width="0.8" opacity="0.35" stroke-dasharray="3 5"/><path d="M658 504 L758 511.4" stroke="#13397c" stroke-width="2.4" stroke-linecap="round"/><path d="M658 502 L758 509.4" stroke="#2d4a7a" stroke-width="0.8" opacity="0.35" stroke-dasharray="3 5"/><path d="M893.5 497 L1064 511.4" stroke="#13397c" stroke-width="2.4" stroke-linecap="round"/><path d="M893.5 495 L1064 509.4" stroke="#2d4a7a" stroke-width="0.8" opacity="0.35" stroke-dasharray="3 5"/><path d="M893.5 513 L1064 520" stroke="#13397c" stroke-width="2.2" stroke-linecap="round"/><path d="M893.5 511 L1064 518" stroke="#2d4a7a" stroke-width="0.8" opacity="0.35" stroke-dasharray="3 5"/><path d="M871 269 L919.2 247.0" stroke="#13397c" stroke-width="3" stroke-linecap="round"/><path d="M919.2 247.0 L1064 181" stroke="#2a4a7e" stroke-width="2.2" stroke-dasharray="5 2 2 3" opacity="0.8"/><path d="M871 289 L936.6 261.0" stroke="#13397c" stroke-width="2.6" stroke-linecap="round"/><path d="M936.6 261.0 L1064 206.6" stroke="#2a4a7e" stroke-width="2.0" stroke-dasharray="5 2 2 3" opacity="0.8"/><path d="M871 338.6 L979.1 304.4" stroke="#13397c" stroke-width="2.8" stroke-linecap="round"/><path d="M979.1 304.4 L1064 277.6" stroke="#2a4a7e" stroke-width="2.1" stroke-dasharray="5 2 2 3" opacity="0.8"/><path d="M871 344 L977.1 374.5" stroke="#13397c" stroke-width="2.8" stroke-linecap="round"/><path d="M977.1 374.5 L1064 399.5" stroke="#2a4a7e" stroke-width="2.1" stroke-dasharray="5 2 2 3" opacity="0.8"/><path d="M871 370 L952.1 386.4" stroke="#13397c" stroke-width="2.6" stroke-linecap="round"/><path d="M952.1 386.4 L1064 409" stroke="#2a4a7e" stroke-width="2.0" stroke-dasharray="5 2 2 3" opacity="0.8"/><path d="M871 378 L928.9 389.1" stroke="#13397c" stroke-width="2.2" stroke-linecap="round"/><path d="M928.9 389.1 L1064 415" stroke="#2a4a7e" stroke-width="1.7" stroke-dasharray="5 2 2 3" opacity="0.8"/><path d="M871 391 L944.3 405.1" stroke="#13397c" stroke-width="2.6" stroke-linecap="round"/><path d="M944.3 405.1 L1064 428" stroke="#2a4a7e" stroke-width="2.0" stroke-dasharray="5 2 2 3" opacity="0.8"/><path d="M655 392 L603.5 698" stroke="#1a2152" stroke-width="2.6"/><path d="M650 440 L608 690" stroke="#1a2152" stroke-width="2.6"/><path d="M656 508 L753 689" stroke="#1a2152" stroke-width="2.6"/><path d="M659 505 L748 690" stroke="#1a2152" stroke-width="2.6"/><rect x="658.9" y="375.2" width="2.4" height="1.1" fill="#1e3146" opacity="0.74"/><rect x="659.4" y="370.2" width="2.1" height="1.1" fill="#1e3146" opacity="0.70"/><rect x="671.9" y="368.7" width="1.9" height="2.3" fill="#1e3146" opacity="0.56"/><rect x="668.7" y="392.7" width="3.1" height="1.9" fill="#1e3146" opacity="0.68"/><rect x="670.1" y="364.1" width="2.9" height="1.5" fill="#1e3146" opacity="0.56"/><rect x="676.7" y="376.6" width="2.8" height="1.3" fill="#1e3146" opacity="0.76"/><rect x="651.6" y="350.2" width="2.2" height="1.1" fill="#1e3146" opacity="0.53"/><rect x="672.3" y="394.1" width="1.9" height="1.5" fill="#1e3146" opacity="0.76"/><rect x="647.8" y="369.9" width="2.7" height="2.1" fill="#1e3146" opacity="0.61"/><rect x="642.2" y="354.0" width="2.9" height="2.2" fill="#1e3146" opacity="0.63"/><rect x="673.9" y="363.8" width="1.9" height="2.2" fill="#1e3146" opacity="0.57"/><rect x="658.4" y="365.4" width="2.5" height="2.2" fill="#1e3146" opacity="0.76"/><rect x="676.3" y="352.8" width="2.5" height="2.0" fill="#1e3146" opacity="0.76"/><rect x="627.2" y="375.4" width="3.1" height="1.8" fill="#1e3146" opacity="0.80"/><rect x="692.9" y="376.6" width="2.4" height="2.6" fill="#1e3146" opacity="0.87"/><rect x="659.7" y="384.3" width="2.5" height="1.0" fill="#1e3146" opacity="0.71"/><rect x="668.9" y="373.7" width="1.1" height="2.2" fill="#1e3146" opacity="0.56"/><rect x="664.3" y="384.9" width="2.9" height="1.1" fill="#1e3146" opacity="0.70"/><rect x="624.5" y="352.3" width="2.8" height="2.4" fill="#1e3146" opacity="0.63"/><rect x="647.8" y="374.6" width="2.9" height="2.5" fill="#1e3146" opacity="0.57"/><rect x="670.5" y="378.0" width="1.5" height="1.8" fill="#1e3146" opacity="0.77"/><rect x="663.9" y="366.8" width="1.9" height="1.6" fill="#1e3146" opacity="0.75"/><rect x="693.3" y="356.1" width="2.1" height="2.0" fill="#1e3146" opacity="0.80"/><rect x="704.4" y="379.3" width="2.7" height="2.4" fill="#1e3146" opacity="0.86"/><rect x="648.3" y="377.6" width="1.2" height="2.0" fill="#1e3146" opacity="0.53"/><rect x="676.5" y="370.6" width="1.4" height="1.5" fill="#1e3146" opacity="0.52"/><rect x="675.5" y="365.0" width="1.2" height="1.6" fill="#1e3146" opacity="0.51"/><rect x="683.4" y="345.4" width="1.3" height="1.4" fill="#1e3146" opacity="0.66"/><rect x="657.3" y="372.7" width="2.9" height="2.6" fill="#1e3146" opacity="0.71"/><rect x="655.6" y="365.9" width="1.2" height="1.5" fill="#1e3146" opacity="0.62"/><rect x="669.6" y="354.6" width="1.1" height="2.5" fill="#1e3146" opacity="0.74"/><rect x="679.1" y="384.9" width="1.1" height="1.8" fill="#1e3146" opacity="0.94"/><rect x="684.2" y="341.6" width="1.6" height="1.6" fill="#1e3146" opacity="0.58"/><rect x="667.4" y="340.6" width="2.7" height="1.5" fill="#1e3146" opacity="0.60"/><rect x="685.8" y="336.0" width="2.8" height="2.2" fill="#1e3146" opacity="0.60"/><rect x="645.4" y="362.9" width="1.1" height="1.0" fill="#1e3146" opacity="0.63"/><rect x="662.2" y="395.7" width="3.1" height="1.7" fill="#1e3146" opacity="0.92"/><rect x="713.7" y="361.3" width="1.8" height="1.4" fill="#1e3146" opacity="0.60"/><rect x="668.4" y="377.8" width="2.4" height="2.4" fill="#1e3146" opacity="0.88"/><rect x="635.1" y="368.7" width="2.8" height="1.1" fill="#1e3146" opacity="0.80"/><rect x="693.5" y="346.2" width="2.7" height="1.8" fill="#1e3146" opacity="0.58"/><rect x="668.4" y="347.6" width="2.8" height="2.6" fill="#1e3146" opacity="0.68"/><rect x="624.6" y="393.1" width="2.6" height="1.3" fill="#1e3146" opacity="0.56"/><rect x="689.2" y="400.3" width="2.8" height="1.2" fill="#1e3146" opacity="0.87"/><rect x="693.0" y="361.4" width="1.8" height="1.9" fill="#1e3146" opacity="0.56"/><rect x="717.0" y="369.8" width="2.4" height="1.8" fill="#1e3146" opacity="0.92"/><rect x="626.9" y="381.4" width="2.8" height="1.3" fill="#1e3146" opacity="0.61"/><rect x="660.0" y="379.3" width="2.3" height="1.4" fill="#1e3146" opacity="0.69"/><rect x="693.8" y="397.2" width="1.8" height="1.7" fill="#1e3146" opacity="0.76"/><rect x="681.2" y="353.2" width="3.0" height="1.8" fill="#1e3146" opacity="0.74"/><rect x="660.2" y="364.4" width="2.0" height="1.3" fill="#1e3146" opacity="0.50"/><rect x="667.7" y="353.3" width="2.0" height="2.2" fill="#1e3146" opacity="0.75"/><rect x="652.9" y="386.5" width="2.2" height="2.3" fill="#1e3146" opacity="0.55"/><rect x="650.0" y="359.4" width="1.6" height="2.2" fill="#1e3146" opacity="0.73"/><rect x="632.7" y="352.2" width="3.0" height="1.7" fill="#1e3146" opacity="0.78"/><rect x="640.1" y="364.2" width="2.5" height="1.7" fill="#1e3146" opacity="0.74"/><rect x="616.8" y="371.6" width="2.5" height="2.4" fill="#1e3146" opacity="0.92"/><rect x="662.5" y="390.6" width="3.1" height="2.3" fill="#1e3146" opacity="0.56"/><rect x="679.6" y="380.0" width="1.2" height="1.4" fill="#1e3146" opacity="0.53"/><rect x="647.0" y="334.4" width="3.0" height="1.2" fill="#1e3146" opacity="0.82"/><rect x="658.1" y="355.6" width="2.9" height="2.5" fill="#1e3146" opacity="0.60"/><rect x="683.3" y="359.1" width="2.1" height="2.6" fill="#1e3146" opacity="0.87"/><rect x="675.2" y="383.1" width="2.1" height="1.5" fill="#1e3146" opacity="0.59"/><rect x="650.6" y="394.1" width="1.0" height="1.9" fill="#1e3146" opacity="0.70"/><rect x="681.8" y="367.0" width="2.4" height="1.8" fill="#1e3146" opacity="0.53"/><rect x="699.1" y="361.7" width="3.1" height="1.2" fill="#1e3146" opacity="0.62"/><rect x="697.7" y="373.6" width="1.6" height="1.2" fill="#1e3146" opacity="0.69"/><rect x="695.4" y="345.5" width="1.6" height="1.2" fill="#1e3146" opacity="0.91"/><rect x="636.0" y="351.7" width="1.2" height="1.1" fill="#1e3146" opacity="0.81"/><rect x="657.1" y="368.5" width="3.1" height="2.0" fill="#1e3146" opacity="0.86"/><rect x="698.1" y="384.8" width="1.1" height="2.4" fill="#1e3146" opacity="0.70"/><rect x="650.5" y="386.5" width="3.0" height="1.4" fill="#1e3146" opacity="0.56"/><rect x="649.4" y="362.5" width="1.2" height="1.3" fill="#1e3146" opacity="0.52"/><rect x="669.2" y="381.5" width="1.7" height="2.2" fill="#1e3146" opacity="0.63"/><rect x="651.5" y="365.0" width="1.8" height="1.0" fill="#1e3146" opacity="0.61"/><rect x="696.4" y="368.1" width="2.2" height="1.3" fill="#1e3146" opacity="0.71"/><rect x="672.7" y="361.2" width="2.8" height="1.7" fill="#1e3146" opacity="0.72"/><rect x="674.1" y="347.8" width="2.1" height="2.1" fill="#1e3146" opacity="0.94"/><rect x="643.2" y="396.6" width="2.6" height="2.0" fill="#1e3146" opacity="0.68"/><rect x="660.2" y="370.5" width="1.3" height="1.1" fill="#1e3146" opacity="0.83"/><rect x="663.6" y="376.9" width="1.2" height="2.3" fill="#1e3146" opacity="0.89"/><rect x="656.2" y="350.7" width="1.5" height="1.5" fill="#1e3146" opacity="0.71"/><rect x="675.9" y="383.2" width="1.6" height="2.5" fill="#1e3146" opacity="0.94"/><rect x="649.7" y="360.6" width="3.1" height="1.5" fill="#1e3146" opacity="0.66"/><rect x="683.6" y="365.1" width="2.0" height="1.8" fill="#1e3146" opacity="0.59"/><rect x="662.0" y="364.9" width="1.6" height="1.1" fill="#1e3146" opacity="0.68"/><rect x="668.1" y="366.1" width="1.7" height="1.4" fill="#1e3146" opacity="0.76"/><rect x="631.2" y="358.9" width="2.4" height="2.1" fill="#1e3146" opacity="0.90"/><rect x="650.3" y="376.4" width="3.2" height="1.2" fill="#1e3146" opacity="0.83"/><rect x="660.3" y="360.3" width="2.8" height="2.4" fill="#1e3146" opacity="0.78"/><rect x="660.3" y="328.6" width="1.3" height="1.8" fill="#1e3146" opacity="0.73"/><rect x="682.4" y="333.9" width="2.8" height="1.9" fill="#1e3146" opacity="0.90"/><rect x="651.4" y="336.9" width="1.5" height="1.0" fill="#1e3146" opacity="0.56"/><rect x="658.0" y="372.2" width="2.8" height="1.9" fill="#1e3146" opacity="0.78"/><rect x="642.8" y="343.5" width="2.1" height="1.0" fill="#1e3146" opacity="0.86"/><rect x="663.7" y="341.4" width="2.2" height="2.1" fill="#1e3146" opacity="0.53"/><rect x="662.7" y="349.8" width="1.2" height="1.4" fill="#1e3146" opacity="0.83"/><rect x="673.1" y="396.5" width="3.1" height="1.8" fill="#1e3146" opacity="0.67"/><rect x="633.9" y="369.0" width="2.7" height="2.0" fill="#1e3146" opacity="0.79"/><rect x="674.0" y="370.3" width="1.6" height="2.2" fill="#1e3146" opacity="0.64"/><rect x="661.1" y="363.7" width="1.1" height="1.4" fill="#1e3146" opacity="0.80"/><rect x="653.3" y="336.9" width="1.6" height="1.8" fill="#1e3146" opacity="0.71"/><rect x="654.2" y="367.1" width="3.0" height="1.3" fill="#1e3146" opacity="0.94"/><rect x="667.5" y="363.5" width="2.0" height="2.3" fill="#1e3146" opacity="0.94"/><rect x="649.0" y="369.9" width="1.5" height="2.5" fill="#1e3146" opacity="0.59"/><rect x="654.4" y="359.6" width="2.2" height="2.5" fill="#1e3146" opacity="0.56"/><rect x="674.2" y="343.4" width="3.0" height="2.1" fill="#1e3146" opacity="0.60"/><rect x="682.5" y="351.2" width="1.1" height="1.0" fill="#1e3146" opacity="0.72"/><rect x="647.8" y="370.2" width="1.3" height="1.6" fill="#1e3146" opacity="0.64"/><rect x="664.6" y="364.0" width="2.7" height="2.3" fill="#1e3146" opacity="0.55"/><rect x="692.3" y="350.9" width="3.0" height="1.5" fill="#1e3146" opacity="0.67"/><rect x="606.7" y="410.7" width="2.3" height="1.6" fill="#1e3146" opacity="0.69"/><rect x="663.0" y="371.2" width="1.2" height="2.3" fill="#1e3146" opacity="0.63"/><rect x="677.9" y="359.0" width="1.6" height="1.8" fill="#1e3146" opacity="0.59"/><rect x="629.0" y="400.7" width="2.9" height="2.3" fill="#1e3146" opacity="0.78"/><rect x="704.7" y="340.4" width="2.2" height="2.2" fill="#1e3146" opacity="0.52"/><rect x="661.6" y="343.2" width="2.7" height="2.0" fill="#1e3146" opacity="0.63"/><rect x="707.6" y="378.9" width="1.3" height="1.8" fill="#1e3146" opacity="0.65"/><rect x="654.3" y="396.3" width="3.1" height="1.4" fill="#1e3146" opacity="0.80"/><rect x="656.0" y="389.2" width="1.9" height="1.3" fill="#1e3146" opacity="0.57"/><rect x="675.4" y="407.0" width="2.1" height="1.4" fill="#1e3146" opacity="0.91"/><rect x="685.9" y="364.5" width="1.3" height="1.3" fill="#1e3146" opacity="0.54"/><rect x="659.2" y="372.3" width="1.5" height="1.4" fill="#1e3146" opacity="0.76"/><rect x="689.3" y="343.3" width="1.9" height="1.7" fill="#1e3146" opacity="0.74"/><rect x="651.0" y="377.7" width="1.1" height="1.4" fill="#1e3146" opacity="0.94"/><rect x="680.6" y="381.8" width="2.4" height="2.4" fill="#1e3146" opacity="0.60"/><rect x="662.0" y="380.0" width="1.9" height="1.7" fill="#1e3146" opacity="0.93"/><rect x="687.6" y="331.9" width="1.0" height="1.1" fill="#1e3146" opacity="0.82"/><rect x="682.0" y="351.2" width="2.3" height="1.0" fill="#1e3146" opacity="0.68"/><rect x="697.5" y="348.4" width="2.9" height="2.6" fill="#1e3146" opacity="0.61"/><rect x="673.0" y="372.3" width="2.1" height="2.1" fill="#1e3146" opacity="0.92"/><rect x="658.9" y="336.6" width="2.7" height="1.7" fill="#1e3146" opacity="0.75"/><rect x="697.9" y="373.6" width="1.5" height="2.5" fill="#1e3146" opacity="0.79"/><rect x="660.5" y="374.9" width="1.6" height="2.0" fill="#1e3146" opacity="0.81"/><rect x="669.8" y="369.9" width="2.2" height="1.9" fill="#1e3146" opacity="0.67"/><rect x="668.5" y="391.7" width="1.0" height="1.5" fill="#1e3146" opacity="0.71"/><rect x="691.8" y="357.7" width="2.9" height="1.8" fill="#1e3146" opacity="0.61"/><rect x="664.9" y="415.9" width="2.6" height="1.5" fill="#1e3146" opacity="0.51"/><rect x="634.0" y="365.3" width="1.9" height="1.4" fill="#1e3146" opacity="0.80"/><rect x="676.8" y="358.5" width="1.1" height="1.5" fill="#1e3146" opacity="0.69"/><rect x="658.5" y="352.9" width="2.8" height="2.2" fill="#1e3146" opacity="0.73"/><rect x="678.7" y="415.8" width="1.7" height="2.3" fill="#1e3146" opacity="0.60"/><rect x="670.0" y="398.3" width="1.6" height="2.5" fill="#1e3146" opacity="0.72"/><rect x="669.5" y="378.1" width="1.9" height="2.1" fill="#1e3146" opacity="0.93"/><rect x="676.1" y="380.9" width="1.5" height="2.6" fill="#1e3146" opacity="0.56"/><rect x="670.7" y="367.3" width="1.9" height="2.4" fill="#1e3146" opacity="0.90"/><rect x="680.2" y="357.6" width="1.4" height="2.5" fill="#1e3146" opacity="0.84"/><rect x="693.0" y="370.9" width="1.8" height="1.6" fill="#1e3146" opacity="0.65"/><rect x="664.7" y="366.3" width="1.6" height="1.6" fill="#1e3146" opacity="0.93"/><rect x="700.8" y="401.2" width="1.5" height="1.6" fill="#1e3146" opacity="0.87"/><rect x="673.3" y="345.9" width="1.1" height="1.8" fill="#1e3146" opacity="0.67"/><rect x="675.5" y="358.7" width="1.8" height="2.4" fill="#1e3146" opacity="0.51"/><rect x="633.0" y="384.4" width="2.7" height="1.1" fill="#1e3146" opacity="0.52"/><rect x="705.5" y="382.2" width="1.6" height="2.2" fill="#1e3146" opacity="0.90"/><rect x="655.5" y="378.5" width="3.1" height="2.0" fill="#1e3146" opacity="0.62"/><rect x="660.4" y="347.9" width="1.6" height="1.0" fill="#1e3146" opacity="0.84"/><rect x="688.5" y="350.8" width="3.1" height="1.0" fill="#1e3146" opacity="0.61"/><rect x="614.5" y="372.8" width="3.1" height="1.6" fill="#1e3146" opacity="0.61"/><rect x="642.9" y="374.9" width="3.0" height="1.3" fill="#1e3146" opacity="0.86"/><rect x="661.3" y="327.9" width="2.7" height="2.0" fill="#1e3146" opacity="0.65"/><rect x="656.0" y="382.2" width="2.7" height="1.1" fill="#1e3146" opacity="0.59"/><rect x="664.3" y="349.9" width="1.1" height="1.1" fill="#1e3146" opacity="0.75"/><rect x="638.3" y="414.8" width="2.9" height="2.6" fill="#1e3146" opacity="0.62"/><rect x="671.8" y="369.5" width="2.1" height="2.1" fill="#1e3146" opacity="0.70"/><rect x="666.1" y="385.7" width="2.4" height="2.1" fill="#1e3146" opacity="0.84"/><rect x="680.9" y="340.8" width="1.3" height="2.3" fill="#1e3146" opacity="0.63"/><rect x="646.4" y="357.1" width="2.6" height="1.3" fill="#1e3146" opacity="0.61"/><rect x="664.3" y="376.5" width="2.9" height="1.9" fill="#1e3146" opacity="0.65"/><rect x="614.3" y="403.0" width="2.1" height="1.4" fill="#1e3146" opacity="0.86"/><rect x="682.2" y="378.6" width="2.8" height="2.3" fill="#1e3146" opacity="0.91"/><rect x="680.1" y="369.2" width="1.3" height="1.3" fill="#1e3146" opacity="0.94"/><rect x="624.0" y="342.0" width="1.8" height="2.4" fill="#1e3146" opacity="0.70"/><rect x="661.8" y="399.6" width="3.1" height="1.2" fill="#1e3146" opacity="0.77"/><rect x="653.8" y="355.4" width="1.8" height="1.2" fill="#1e3146" opacity="0.59"/><rect x="663.2" y="392.0" width="2.4" height="1.3" fill="#1e3146" opacity="0.51"/><rect x="649.9" y="391.6" width="1.4" height="1.5" fill="#1e3146" opacity="0.59"/><rect x="671.1" y="340.8" width="1.1" height="1.2" fill="#1e3146" opacity="0.68"/><rect x="636.8" y="356.2" width="1.2" height="1.3" fill="#1e3146" opacity="0.81"/><rect x="650.2" y="373.8" width="1.7" height="2.5" fill="#1e3146" opacity="0.64"/><rect x="646.8" y="357.4" width="1.9" height="2.4" fill="#1e3146" opacity="0.95"/><rect x="655.3" y="375.0" width="2.6" height="1.3" fill="#1e3146" opacity="0.50"/><rect x="681.1" y="352.8" width="2.8" height="1.6" fill="#1e3146" opacity="0.90"/><rect x="652.4" y="367.9" width="1.0" height="1.9" fill="#1e3146" opacity="0.79"/><rect x="671.3" y="360.4" width="2.4" height="1.6" fill="#1e3146" opacity="0.73"/><rect x="673.9" y="378.0" width="2.1" height="2.5" fill="#1e3146" opacity="0.55"/><rect x="627.9" y="367.2" width="3.1" height="1.3" fill="#1e3146" opacity="0.56"/><rect x="715.0" y="345.9" width="2.1" height="1.1" fill="#1e3146" opacity="0.92"/><rect x="631.0" y="393.1" width="2.4" height="2.3" fill="#1e3146" opacity="0.57"/><rect x="667.2" y="351.2" width="1.9" height="2.4" fill="#1e3146" opacity="0.87"/><rect x="669.7" y="377.8" width="1.9" height="1.8" fill="#1e3146" opacity="0.67"/><rect x="674.8" y="375.5" width="2.6" height="2.4" fill="#1e3146" opacity="0.52"/><rect x="632.9" y="352.1" width="1.1" height="2.3" fill="#1e3146" opacity="0.55"/><rect x="643.5" y="350.2" width="2.4" height="1.5" fill="#1e3146" opacity="0.69"/><rect x="645.7" y="354.5" width="2.4" height="1.7" fill="#1e3146" opacity="0.70"/><rect x="691.5" y="369.1" width="2.1" height="1.4" fill="#1e3146" opacity="0.84"/><rect x="668.1" y="343.2" width="1.4" height="1.8" fill="#1e3146" opacity="0.55"/><rect x="678.7" y="380.3" width="1.2" height="1.7" fill="#1e3146" opacity="0.73"/><rect x="691.5" y="372.2" width="1.2" height="2.2" fill="#1e3146" opacity="0.85"/><rect x="657.3" y="364.5" width="2.1" height="1.6" fill="#1e3146" opacity="0.93"/><rect x="689.9" y="394.8" width="3.2" height="2.2" fill="#1e3146" opacity="0.87"/><rect x="683.6" y="418.1" width="2.1" height="2.5" fill="#1e3146" opacity="0.91"/><rect x="681.9" y="395.4" width="3.0" height="1.1" fill="#1e3146" opacity="0.66"/><rect x="664.5" y="353.2" width="3.0" height="1.4" fill="#1e3146" opacity="0.87"/><rect x="678.6" y="383.5" width="3.0" height="1.3" fill="#1e3146" opacity="0.62"/><rect x="646.5" y="364.3" width="1.1" height="1.3" fill="#1e3146" opacity="0.57"/><rect x="691.8" y="353.3" width="3.0" height="1.3" fill="#1e3146" opacity="0.85"/><rect x="682.4" y="381.3" width="2.4" height="1.6" fill="#1e3146" opacity="0.89"/><rect x="639.2" y="356.0" width="2.9" height="1.2" fill="#1e3146" opacity="0.95"/><rect x="650.3" y="350.4" width="2.8" height="1.4" fill="#1e3146" opacity="0.95"/><rect x="647.3" y="356.2" width="2.7" height="1.7" fill="#1e3146" opacity="0.58"/><rect x="663.7" y="358.7" width="2.8" height="1.4" fill="#1e3146" opacity="0.79"/><rect x="690.4" y="362.3" width="2.5" height="1.5" fill="#1e3146" opacity="0.50"/><rect x="675.1" y="367.4" width="2.4" height="1.7" fill="#1e3146" opacity="0.73"/><rect x="672.4" y="358.5" width="1.5" height="2.0" fill="#1e3146" opacity="0.51"/><rect x="682.7" y="365.3" width="1.2" height="1.6" fill="#1e3146" opacity="0.60"/><rect x="640.9" y="351.6" width="1.4" height="2.0" fill="#1e3146" opacity="0.71"/><rect x="695.1" y="400.2" width="1.5" height="1.2" fill="#1e3146" opacity="0.54"/><rect x="637.8" y="334.1" width="2.7" height="1.6" fill="#1e3146" opacity="0.62"/><rect x="692.7" y="367.1" width="2.2" height="1.6" fill="#1e3146" opacity="0.79"/><rect x="619.9" y="381.3" width="2.6" height="1.4" fill="#1e3146" opacity="0.91"/><rect x="687.7" y="371.7" width="1.9" height="1.4" fill="#1e3146" opacity="0.53"/><rect x="664.6" y="361.9" width="2.2" height="2.5" fill="#1e3146" opacity="0.56"/><rect x="672.5" y="391.0" width="2.1" height="2.0" fill="#1e3146" opacity="0.87"/><rect x="671.8" y="380.3" width="1.7" height="1.1" fill="#1e3146" opacity="0.90"/><rect x="670.5" y="334.0" width="1.0" height="2.4" fill="#1e3146" opacity="0.84"/><rect x="631.9" y="372.1" width="2.0" height="1.4" fill="#1e3146" opacity="0.55"/><rect x="664.6" y="370.6" width="1.7" height="2.2" fill="#1e3146" opacity="0.81"/><rect x="681.8" y="338.9" width="1.6" height="1.9" fill="#1e3146" opacity="0.70"/><rect x="669.8" y="341.4" width="1.6" height="2.0" fill="#1e3146" opacity="0.93"/><rect x="672.5" y="405.3" width="1.0" height="1.4" fill="#1e3146" opacity="0.61"/><rect x="663.6" y="347.2" width="2.9" height="1.5" fill="#1e3146" opacity="0.61"/><rect x="687.6" y="349.5" width="2.5" height="2.1" fill="#1e3146" opacity="0.94"/><rect x="626.4" y="372.3" width="2.5" height="2.4" fill="#1e3146" opacity="0.70"/><rect x="659.9" y="339.3" width="1.7" height="1.3" fill="#1e3146" opacity="0.78"/><rect x="702.8" y="385.6" width="1.3" height="1.0" fill="#1e3146" opacity="0.55"/><rect x="680.6" y="357.1" width="1.3" height="1.0" fill="#1e3146" opacity="0.52"/><rect x="654.0" y="338.5" width="2.5" height="2.2" fill="#1e3146" opacity="0.53"/><rect x="648.0" y="354.8" width="2.8" height="2.3" fill="#1e3146" opacity="0.90"/><rect x="700.8" y="381.2" width="3.0" height="2.5" fill="#1e3146" opacity="0.55"/><rect x="666.7" y="374.4" width="1.1" height="2.4" fill="#1e3146" opacity="0.87"/><rect x="639.2" y="337.1" width="2.4" height="1.5" fill="#1e3146" opacity="0.54"/><rect x="691.5" y="384.4" width="1.5" height="1.5" fill="#1e3146" opacity="0.69"/><rect x="679.3" y="367.0" width="1.6" height="2.1" fill="#1e3146" opacity="0.67"/><rect x="641.8" y="411.5" width="2.1" height="2.4" fill="#1e3146" opacity="0.78"/><rect x="684.3" y="369.0" width="2.0" height="2.2" fill="#1e3146" opacity="0.66"/><rect x="657.0" y="341.2" width="1.5" height="2.4" fill="#1e3146" opacity="0.54"/><rect x="669.2" y="353.9" width="1.0" height="1.3" fill="#1e3146" opacity="0.84"/><rect x="665.9" y="364.7" width="2.1" height="1.8" fill="#1e3146" opacity="0.86"/><rect x="673.3" y="386.4" width="1.8" height="2.3" fill="#1e3146" opacity="0.62"/><rect x="679.3" y="359.4" width="1.5" height="2.1" fill="#1e3146" opacity="0.72"/><rect x="685.9" y="383.1" width="1.2" height="2.3" fill="#1e3146" opacity="0.81"/><rect x="670.5" y="337.6" width="1.8" height="1.6" fill="#1e3146" opacity="0.68"/><rect x="670.6" y="359.6" width="3.0" height="1.0" fill="#1e3146" opacity="0.59"/><rect x="660.4" y="407.9" width="2.1" height="1.6" fill="#1e3146" opacity="0.90"/><rect x="666.3" y="387.1" width="2.2" height="2.2" fill="#1e3146" opacity="0.84"/><rect x="652.8" y="350.3" width="1.7" height="1.2" fill="#1e3146" opacity="0.88"/><rect x="646.7" y="337.0" width="1.4" height="1.7" fill="#1e3146" opacity="0.85"/><rect x="654.9" y="360.0" width="2.0" height="2.4" fill="#1e3146" opacity="0.61"/><rect x="670.1" y="380.8" width="2.5" height="2.3" fill="#1e3146" opacity="0.57"/><rect x="672.4" y="377.5" width="1.7" height="1.8" fill="#1e3146" opacity="0.57"/><rect x="657.9" y="376.4" width="3.1" height="2.2" fill="#1e3146" opacity="0.55"/><rect x="673.0" y="362.8" width="1.8" height="2.6" fill="#1e3146" opacity="0.86"/><rect x="661.8" y="343.7" width="1.4" height="2.0" fill="#1e3146" opacity="0.55"/><rect x="669.4" y="384.1" width="1.1" height="1.6" fill="#1e3146" opacity="0.86"/><rect x="655.8" y="342.9" width="2.4" height="1.7" fill="#1e3146" opacity="0.56"/><rect x="647.8" y="352.6" width="2.6" height="2.5" fill="#1e3146" opacity="0.69"/><rect x="634.3" y="350.1" width="1.9" height="1.4" fill="#1e3146" opacity="0.82"/><rect x="689.2" y="341.4" width="2.5" height="2.4" fill="#1e3146" opacity="0.81"/><rect x="650.1" y="347.9" width="1.7" height="2.0" fill="#1e3146" opacity="0.54"/><rect x="633.4" y="381.9" width="2.6" height="2.0" fill="#1e3146" opacity="0.61"/><rect x="644.5" y="375.2" width="2.4" height="1.7" fill="#1e3146" opacity="0.80"/><rect x="675.5" y="359.6" width="2.4" height="2.2" fill="#1e3146" opacity="0.67"/><rect x="609.9" y="368.5" width="1.1" height="1.9" fill="#1e3146" opacity="0.57"/><rect x="654.8" y="363.9" width="2.3" height="1.9" fill="#1e3146" opacity="0.82"/><rect x="635.5" y="362.8" width="2.8" height="1.8" fill="#1e3146" opacity="0.68"/><rect x="677.0" y="360.6" width="2.5" height="1.6" fill="#1e3146" opacity="0.84"/><rect x="705.5" y="405.1" width="1.8" height="1.1" fill="#1e3146" opacity="0.62"/><rect x="661.4" y="366.9" width="1.9" height="1.7" fill="#1e3146" opacity="0.81"/><rect x="654.6" y="377.6" width="1.5" height="2.2" fill="#1e3146" opacity="0.92"/><rect x="650.1" y="362.6" width="2.8" height="1.6" fill="#1e3146" opacity="0.60"/><rect x="687.8" y="390.1" width="2.8" height="2.0" fill="#1e3146" opacity="0.71"/><rect x="650.8" y="359.6" width="3.1" height="1.6" fill="#1e3146" opacity="0.79"/><rect x="679.4" y="331.6" width="2.0" height="1.5" fill="#1e3146" opacity="0.75"/><rect x="690.8" y="391.8" width="1.8" height="2.4" fill="#1e3146" opacity="0.62"/><rect x="653.1" y="375.7" width="1.9" height="1.3" fill="#1e3146" opacity="0.50"/><rect x="661.1" y="349.0" width="1.5" height="1.5" fill="#1e3146" opacity="0.72"/><rect x="638.3" y="377.4" width="2.5" height="1.6" fill="#1e3146" opacity="0.92"/><rect x="668.2" y="359.6" width="2.8" height="2.4" fill="#1e3146" opacity="0.85"/><rect x="688.0" y="394.1" width="2.4" height="1.0" fill="#1e3146" opacity="0.51"/><rect x="691.9" y="356.3" width="1.6" height="1.2" fill="#1e3146" opacity="0.56"/><rect x="667.6" y="399.4" width="1.8" height="1.2" fill="#1e3146" opacity="0.91"/><rect x="667.1" y="353.3" width="3.0" height="2.0" fill="#1e3146" opacity="0.85"/><rect x="643.2" y="328.1" width="2.7" height="2.3" fill="#1e3146" opacity="0.59"/><rect x="655.3" y="342.0" width="2.6" height="1.7" fill="#1e3146" opacity="0.90"/><rect x="649.3" y="359.7" width="1.5" height="1.2" fill="#1e3146" opacity="0.72"/><rect x="676.4" y="405.8" width="1.6" height="1.6" fill="#24384a" opacity="0.67"/><rect x="671.2" y="459.7" width="0.8" height="2.1" fill="#24384a" opacity="0.63"/><rect x="657.1" y="458.0" width="1.4" height="1.5" fill="#24384a" opacity="0.88"/><rect x="663.5" y="400.7" width="1.8" height="1.8" fill="#24384a" opacity="0.41"/><rect x="658.6" y="464.9" width="1.3" height="2.4" fill="#24384a" opacity="0.66"/><rect x="660.3" y="431.4" width="2.2" height="0.9" fill="#24384a" opacity="0.76"/><rect x="662.9" y="459.6" width="1.4" height="1.6" fill="#24384a" opacity="0.66"/><rect x="662.8" y="452.8" width="1.1" height="1.5" fill="#24384a" opacity="0.61"/><rect x="653.9" y="417.0" width="2.1" height="1.4" fill="#24384a" opacity="0.65"/><rect x="663.0" y="415.4" width="1.6" height="2.4" fill="#24384a" opacity="0.73"/><rect x="669.9" y="418.8" width="1.3" height="1.7" fill="#24384a" opacity="0.72"/><rect x="661.1" y="453.8" width="0.9" height="2.0" fill="#24384a" opacity="0.84"/><rect x="665.5" y="417.5" width="0.8" height="1.1" fill="#24384a" opacity="0.86"/><rect x="667.3" y="440.7" width="1.9" height="2.1" fill="#24384a" opacity="0.85"/><rect x="659.5" y="442.0" width="1.9" height="1.8" fill="#24384a" opacity="0.74"/><rect x="660.8" y="410.9" width="1.9" height="1.5" fill="#24384a" opacity="0.78"/><rect x="672.1" y="397.8" width="2.0" height="2.3" fill="#24384a" opacity="0.73"/><rect x="671.0" y="422.7" width="2.1" height="2.1" fill="#24384a" opacity="0.68"/><rect x="667.7" y="426.6" width="1.3" height="1.5" fill="#24384a" opacity="0.72"/><rect x="674.8" y="465.0" width="0.9" height="1.7" fill="#24384a" opacity="0.42"/><rect x="678.7" y="438.1" width="2.3" height="1.5" fill="#24384a" opacity="0.41"/><rect x="677.9" y="424.0" width="1.7" height="2.3" fill="#24384a" opacity="0.89"/><rect x="659.8" y="402.7" width="1.8" height="1.1" fill="#24384a" opacity="0.48"/><rect x="669.3" y="396.2" width="0.8" height="1.9" fill="#24384a" opacity="0.46"/><rect x="671.4" y="460.2" width="1.0" height="0.8" fill="#24384a" opacity="0.76"/><rect x="667.3" y="413.2" width="2.0" height="1.1" fill="#24384a" opacity="0.43"/><rect x="669.9" y="459.2" width="2.0" height="0.9" fill="#24384a" opacity="0.71"/><rect x="655.5" y="448.2" width="1.5" height="2.3" fill="#24384a" opacity="0.53"/><rect x="680.4" y="395.9" width="0.8" height="1.8" fill="#24384a" opacity="0.81"/><rect x="665.2" y="401.0" width="1.3" height="2.0" fill="#24384a" opacity="0.48"/><rect x="673.9" y="399.5" width="1.4" height="1.7" fill="#24384a" opacity="0.62"/><rect x="660.9" y="445.8" width="1.0" height="2.1" fill="#24384a" opacity="0.58"/><rect x="661.1" y="426.3" width="1.4" height="2.1" fill="#24384a" opacity="0.87"/><rect x="659.1" y="453.8" width="1.7" height="1.3" fill="#24384a" opacity="0.43"/><rect x="680.3" y="457.1" width="1.3" height="1.8" fill="#24384a" opacity="0.89"/><rect x="666.0" y="457.3" width="1.8" height="1.3" fill="#24384a" opacity="0.61"/><rect x="673.9" y="446.4" width="1.8" height="2.2" fill="#24384a" opacity="0.80"/><rect x="663.0" y="416.2" width="0.8" height="1.2" fill="#24384a" opacity="0.61"/><rect x="655.4" y="461.6" width="0.9" height="2.1" fill="#24384a" opacity="0.81"/><rect x="660.4" y="460.0" width="1.7" height="1.2" fill="#24384a" opacity="0.83"/><rect x="672.3" y="463.5" width="1.4" height="0.9" fill="#24384a" opacity="0.68"/><rect x="656.6" y="454.8" width="1.1" height="2.0" fill="#24384a" opacity="0.87"/><rect x="669.1" y="445.8" width="1.5" height="1.1" fill="#24384a" opacity="0.53"/><rect x="678.9" y="451.3" width="2.1" height="1.5" fill="#24384a" opacity="0.44"/><rect x="672.8" y="412.5" width="1.7" height="2.2" fill="#24384a" opacity="0.84"/><rect x="655.1" y="434.1" width="1.6" height="1.7" fill="#24384a" opacity="0.49"/><rect x="669.8" y="447.6" width="1.4" height="1.7" fill="#24384a" opacity="0.60"/><rect x="672.7" y="433.8" width="1.0" height="0.9" fill="#24384a" opacity="0.90"/><rect x="665.3" y="442.5" width="2.1" height="1.0" fill="#24384a" opacity="0.70"/><rect x="670.7" y="420.9" width="1.6" height="0.8" fill="#24384a" opacity="0.42"/><rect x="684.0" y="431.5" width="1.7" height="1.2" fill="#24384a" opacity="0.79"/><rect x="667.0" y="426.9" width="2.3" height="2.0" fill="#24384a" opacity="0.81"/><rect x="674.0" y="397.8" width="1.1" height="1.1" fill="#24384a" opacity="0.44"/><rect x="666.6" y="398.8" width="1.7" height="2.2" fill="#24384a" opacity="0.63"/><rect x="684.6" y="399.8" width="1.8" height="1.4" fill="#24384a" opacity="0.46"/><rect x="662.3" y="466.9" width="1.2" height="1.7" fill="#24384a" opacity="0.72"/><rect x="679.5" y="424.5" width="1.5" height="1.1" fill="#24384a" opacity="0.88"/><rect x="664.8" y="469.4" width="1.2" height="0.9" fill="#24384a" opacity="0.53"/><rect x="657.7" y="462.8" width="2.1" height="0.9" fill="#24384a" opacity="0.79"/><rect x="681.8" y="448.2" width="1.8" height="2.4" fill="#24384a" opacity="0.43"/><path d="M632 332 L700 336 M611 373 L703 381 M632 373 L658 400 L690 378" stroke="#3f8d9b" stroke-width="4" fill="none"/><path d="M632 332 L700 336 M611 373 L703 381" stroke="#6bc2cf" stroke-width="1.2" fill="none"/><polygon points="659.5,285 667.5,285 660,704 640,704" fill="#56b6c4"/><polygon points="664,285 667.5,285 660,704 652,704" fill="#4aa8b7"/><rect x="659.6" y="421.8" width="13.2" height="23.2" rx="2" fill="#3b7fa6"/><rect x="666" y="677" width="16" height="26" rx="3" fill="#9fb5b8"/><path d="M585 305 L634.5 335" stroke="#73d0e2" stroke-width="2"/><path d="M585 305 L668 329" stroke="#73d0e2" stroke-width="2"/><path d="M585 307 L679 325" stroke="#73d0e2" stroke-width="2"/><path d="M515 409 L611 372.4" stroke="#73d0e2" stroke-width="2"/><path d="M725 310.7 L679 336" stroke="#73d0e2" stroke-width="2"/><path d="M758 482 L671 441" stroke="#73d0e2" stroke-width="2"/><path d="M557 566 L649.6 597" stroke="#73d0e2" stroke-width="2"/><path d="M782 633 L738 658.6" stroke="#73d0e2" stroke-width="2"/><circle cx="634.5" cy="335" r="4.3" fill="#73d0e2" stroke="#fff" stroke-width="1"/><circle cx="679" cy="325" r="4.3" fill="#73d0e2" stroke="#fff" stroke-width="1"/><circle cx="679" cy="336" r="4.3" fill="#73d0e2" stroke="#fff" stroke-width="1"/><circle cx="611" cy="372.4" r="4.3" fill="#73d0e2" stroke="#fff" stroke-width="1"/><circle cx="624" cy="375" r="4.3" fill="#73d0e2" stroke="#fff" stroke-width="1"/><circle cx="658" cy="376" r="4.3" fill="#73d0e2" stroke="#fff" stroke-width="1"/><circle cx="700.7" cy="382" r="4.3" fill="#73d0e2" stroke="#fff" stroke-width="1"/><circle cx="671" cy="441" r="4.3" fill="#73d0e2" stroke="#fff" stroke-width="1"/><circle cx="657" cy="469" r="4.3" fill="#73d0e2" stroke="#fff" stroke-width="1"/><circle cx="657.5" cy="502.6" r="4.3" fill="#73d0e2" stroke="#fff" stroke-width="1"/><circle cx="649.6" cy="597" r="4.3" fill="#73d0e2" stroke="#fff" stroke-width="1"/><circle cx="738" cy="658.6" r="4.3" fill="#73d0e2" stroke="#fff" stroke-width="1"/><g opacity="1"><circle cx="991" cy="248.5" r="56" fill="#dadde2" fill-opacity="0.72" stroke="#e4e6ea" stroke-width="1"/><circle cx="991" cy="248.5" r="26" fill="none" stroke="#e0e2e6" stroke-width="1"/><path d="M1015.0 258.4 L1042.7 269.9" stroke="#eceef1" stroke-width="1"/><path d="M1000.9 272.5 L1012.4 300.2" stroke="#eceef1" stroke-width="1"/><path d="M981.1 272.5 L969.6 300.2" stroke="#eceef1" stroke-width="1"/><path d="M967.0 258.4 L939.3 269.9" stroke="#eceef1" stroke-width="1"/><path d="M967.0 238.6 L939.3 227.1" stroke="#eceef1" stroke-width="1"/><path d="M981.1 224.5 L969.6 196.8" stroke="#eceef1" stroke-width="1"/><path d="M1000.9 224.5 L1012.4 196.8" stroke="#eceef1" stroke-width="1"/><path d="M1015.0 238.6 L1042.7 227.1" stroke="#eceef1" stroke-width="1"/><path d="M965 248.5 H1017" stroke="#eceef1" stroke-width="1"/><text x="990.7" y="210.5" font-family="Liberation Sans" font-weight="bold" font-size="6.5" fill="#7e858e" text-anchor="middle">FRONT</text><text x="990.7" y="239.5" font-family="Liberation Sans" font-weight="bold" font-size="6.5" fill="#7e858e" text-anchor="middle">TOP</text><text x="948.6" y="251" font-family="Liberation Sans" font-weight="bold" font-size="6.5" fill="#7e858e" text-anchor="middle">LEFT</text><text x="1031.3" y="251" font-family="Liberation Sans" font-weight="bold" font-size="6.5" fill="#7e858e" text-anchor="middle">RIGHT</text><text x="990.7" y="262.5" font-family="Liberation Sans" font-weight="bold" font-size="6.5" fill="#7e858e" text-anchor="middle">BOTTOM</text><text x="990.7" y="291" font-family="Liberation Sans" font-weight="bold" font-size="6.5" fill="#7e858e" text-anchor="middle">BACK</text></g><rect x="242" y="193" width="21.5" height="22" rx="2" fill="#e2e4e8"/><circle cx="253" cy="204" r="4.8" fill="none" stroke="#2b3036" stroke-width="1.6"/><path d="M253 197.2 v3.4 M253 210.8 v-3.4 M246.2 204 h3.4 M259.8 204 h-3.4" stroke="#2b3036" stroke-width="1.9"/><rect x="1025" y="317.7" width="21.5" height="22" rx="2" fill="#e2e4e8"/><path d="M1035.8 322.5 V334.5 M1029.8 328.5 H1041.8" stroke="#2b3036" stroke-width="1.8"/><rect x="1025" y="342" width="21.5" height="22" rx="2" fill="#e2e4e8"/><path d="M1029.8 353 H1041.8" stroke="#2b3036" stroke-width="1.8"/><rect x="1025" y="373.4" width="21.5" height="22" rx="2" fill="#e2e4e8"/><path d="M1030.5 383 A5.5 5.5 0 0 1 1040.5 381 M1041 386 A5.5 5.5 0 0 1 1031 388" fill="none" stroke="#2b3036" stroke-width="1.8"/><path d="M1041.8 377.5 V382.5 H1036.8Z M1029.8 391.5 V386.5 H1034.8Z" fill="#2b3036"/><rect x="1025" y="398" width="21.5" height="22" rx="2" fill="#e2e4e8"/><circle cx="1035.8" cy="409" r="6" fill="#2b3036"/><path d="M1032 405 Q1035 404 1035 407 Q1033 410 1031 409Z M1037 410 Q1040 409 1040 412 L1037 414Z" fill="#e2e4e8"/></svg>
<div class="a" style="left:485.6px;top:285.6px;width:99.6px;height:41.4px;background:#fff;border-radius:4px;box-shadow:0 0 0 1px rgba(255,255,255,0.6)"></div>
<div class="a" style="left:487.1px;top:287.1px;width:96.6px;height:18.2px;background:#76d2e3;border-radius:3px 3px 0 0"></div>
<svg style="left:529.4px;top:288.95000000000005px;" width="12" height="13" viewBox="0 0 12 13"><path d="M9.64 4.96 A3.7 3.7 0 1 1 8.38 2.77" fill="none" stroke="#fff" stroke-width="1.7" stroke-linecap="round"/><path d="M7.67 8.93 L9.52 11.34" stroke="#fff" stroke-width="2.0" stroke-linecap="round"/></svg>
<div class="t" style="left:435.4px;width:200px;text-align:center;top:310.5px;font-size:10.6px;color:#2b3036;font-weight:bold"><span style="font-size:8.6px;font-weight:normal;letter-spacing:-0.1px">Wire 001</span> Insulator</div>
<div class="a" style="left:411.6px;top:387.4px;width:103.9px;height:42.1px;background:#fff;border-radius:4px;box-shadow:0 0 0 1px rgba(255,255,255,0.6)"></div>
<div class="a" style="left:413.1px;top:388.9px;width:100.9px;height:18.1px;background:#76d2e3;border-radius:3px 3px 0 0"></div>
<svg style="left:457.55px;top:390.7px;" width="12" height="13" viewBox="0 0 12 13"><path d="M9.64 4.96 A3.7 3.7 0 1 1 8.38 2.77" fill="none" stroke="#fff" stroke-width="1.7" stroke-linecap="round"/><path d="M7.67 8.93 L9.52 11.34" stroke="#fff" stroke-width="2.0" stroke-linecap="round"/></svg>
<div class="t" style="left:363.55px;width:200px;text-align:center;top:412.7px;font-size:10.6px;color:#2b3036;font-weight:bold"><span style="font-size:8.6px;font-weight:normal;letter-spacing:-0.1px">Wire 002</span> Crossarm</div>
<div class="a" style="left:726px;top:244.3px;width:145px;height:153px;background:#fff;border-radius:4px;box-shadow:0 0 0 1px rgba(255,255,255,0.6)"></div>
<div class="a" style="left:727.5px;top:245.8px;width:142px;height:18.2px;background:#76d2e3;border-radius:3px 3px 0 0"></div>
<svg style="left:792.5px;top:247.65px;" width="12" height="13" viewBox="0 0 12 13"><path d="M9.64 4.96 A3.7 3.7 0 1 1 8.38 2.77" fill="none" stroke="#fff" stroke-width="1.7" stroke-linecap="round"/><path d="M7.67 8.93 L9.52 11.34" stroke="#fff" stroke-width="2.0" stroke-linecap="round"/></svg>
<div class="t" style="left:698.5px;width:200px;text-align:center;top:269.5px;font-size:10.6px;color:#2b3036;font-weight:bold"><span style="font-size:8.6px;font-weight:normal;letter-spacing:-0.1px">Wire 001</span> Crossarm</div>
<div class="t" style="left:734.8px;top:292.05px;font-size:10.3px;color:#9aa6b3;font-weight:bold;letter-spacing:-0.1px;">Owner</div>
<div class="t" style="left:775.5px;top:291.45px;font-size:11px;color:#2f3338;">Looq Power</div>
<div class="t" style="left:734.8px;top:314.05px;font-size:10.3px;color:#9aa6b3;font-weight:bold;letter-spacing:-0.1px;">Type</div>
<div class="t" style="left:768px;top:313.45px;font-size:11px;color:#2f3338;">8’ Crossarm</div>
<div class="t" style="left:734.8px;top:336.44px;font-size:10.3px;color:#9aa6b3;font-weight:bold;letter-spacing:-0.1px;">Height</div>
<div class="t" style="left:776.6px;top:335.85px;font-size:11px;color:#2f3338;">32.25’</div>
<div class="t" style="left:734.8px;top:358.75px;font-size:10.3px;color:#9aa6b3;font-weight:bold;letter-spacing:-0.1px;">Length</div>
<div class="t" style="left:779px;top:358.15px;font-size:11px;color:#2f3338;">8’</div>
<div class="t" style="left:734.8px;top:380.55px;font-size:10.3px;color:#9aa6b3;font-weight:bold;letter-spacing:-0.1px;">Orientation</div>
<div class="t" style="left:800px;top:379.95px;font-size:11px;color:#2f3338;">268°</div>
<div class="a" style="left:758px;top:463px;width:136px;height:108.8px;background:#fff;border-radius:4px;box-shadow:0 0 0 1px rgba(255,255,255,0.6)"></div>
<div class="a" style="left:759.5px;top:464.5px;width:133px;height:18.8px;background:#76d2e3;border-radius:3px 3px 0 0"></div>
<svg style="left:820.0px;top:466.65px;" width="12" height="13" viewBox="0 0 12 13"><path d="M9.64 4.96 A3.7 3.7 0 1 1 8.38 2.77" fill="none" stroke="#fff" stroke-width="1.7" stroke-linecap="round"/><path d="M7.67 8.93 L9.52 11.34" stroke="#fff" stroke-width="2.0" stroke-linecap="round"/></svg>
<div class="t" style="left:726.0px;width:200px;text-align:center;top:488.6px;font-size:10.6px;color:#2b3036;font-weight:bold"><span style="font-size:8.6px;font-weight:normal;letter-spacing:-0.1px">Equipment 001</span> Tranformer</div>
<div class="t" style="left:766px;top:510.64px;font-size:10.3px;color:#9aa6b3;font-weight:bold;letter-spacing:-0.1px;">Owner</div>
<div class="t" style="left:807.4px;top:510.05px;font-size:11px;color:#2f3338;">Looq Power</div>
<div class="t" style="left:766px;top:532.85px;font-size:10.3px;color:#9aa6b3;font-weight:bold;letter-spacing:-0.1px;">Size</div>
<div class="t" style="left:798px;top:532.25px;font-size:11px;color:#2f3338;">10kVA</div>
<div class="t" style="left:766px;top:555.04px;font-size:10.3px;color:#9aa6b3;font-weight:bold;letter-spacing:-0.1px;">Tension</div>
<div class="t" style="left:815px;top:554.45px;font-size:11px;color:#2f3338;">Full</div>
<div class="a" style="left:411.4px;top:499.8px;width:145px;height:130.8px;background:#fff;border-radius:4px;box-shadow:0 0 0 1px rgba(255,255,255,0.6)"></div>
<div class="a" style="left:412.9px;top:501.3px;width:142px;height:17.7px;background:#76d2e3;border-radius:3px 3px 0 0"></div>
<svg style="left:477.9px;top:502.90000000000003px;" width="12" height="13" viewBox="0 0 12 13"><path d="M9.64 4.96 A3.7 3.7 0 1 1 8.38 2.77" fill="none" stroke="#fff" stroke-width="1.7" stroke-linecap="round"/><path d="M7.67 8.93 L9.52 11.34" stroke="#fff" stroke-width="2.0" stroke-linecap="round"/></svg>
<div class="t" style="left:383.9px;width:200px;text-align:center;top:524.8px;font-size:10.6px;color:#2b3036;font-weight:bold"><span style="font-size:8.6px;font-weight:normal;letter-spacing:-0.1px">Pole001</span> 26726</div>
<div class="t" style="left:420px;top:547.54px;font-size:10.3px;color:#9aa6b3;font-weight:bold;letter-spacing:-0.1px;">Owner</div>
<div class="t" style="left:461px;top:546.95px;font-size:11px;color:#2f3338;">Looq Power</div>
<div class="t" style="left:420px;top:569.64px;font-size:10.3px;color:#9aa6b3;font-weight:bold;letter-spacing:-0.1px;">Species</div>
<div class="t" style="left:468.6px;top:569.05px;font-size:11px;color:#2f3338;">Southern Pine...</div>
<div class="t" style="left:420px;top:591.85px;font-size:10.3px;color:#9aa6b3;font-weight:bold;letter-spacing:-0.1px;">Length</div>
<div class="t" style="left:464.6px;top:591.25px;font-size:11px;color:#2f3338;">40’</div>
<div class="t" style="left:420px;top:614.04px;font-size:10.3px;color:#9aa6b3;font-weight:bold;letter-spacing:-0.1px;">Class</div>
<div class="t" style="left:457px;top:613.45px;font-size:11px;color:#2f3338;">5</div>
<div class="a" style="left:782px;top:613px;width:53px;height:41.8px;background:#fff;border-radius:4px;box-shadow:0 0 0 1px rgba(255,255,255,0.6)"></div>
<div class="a" style="left:783.5px;top:614.5px;width:50px;height:18.2px;background:#76d2e3;border-radius:3px 3px 0 0"></div>
<svg style="left:802.5px;top:616.35px;" width="12" height="13" viewBox="0 0 12 13"><path d="M9.64 4.96 A3.7 3.7 0 1 1 8.38 2.77" fill="none" stroke="#fff" stroke-width="1.7" stroke-linecap="round"/><path d="M7.67 8.93 L9.52 11.34" stroke="#fff" stroke-width="2.0" stroke-linecap="round"/></svg>
<div class="t" style="left:708.5px;width:200px;text-align:center;top:638.0px;font-size:10.6px;color:#2b3036;font-weight:bold">Guying</div>
<svg style="left:1084.5px;top:234px" width="207" height="181" viewBox="0 0 207 181"><defs><filter id="pn" x="0" y="0" width="100%" height="100%"><feTurbulence type="fractalNoise" baseFrequency="0.7" numOctaves="2" seed="5"/><feColorMatrix values="0 0 0 0 0  0 0 0 0 0  0 0 0 0 0  0 0 0 0.7 -0.2"/><feComposite in2="SourceGraphic" operator="in"/></filter><filter id="ps" x="0" y="0" width="100%" height="100%"><feTurbulence type="fractalNoise" baseFrequency="0.012 0.09" numOctaves="2" seed="11"/><feColorMatrix values="0 0 0 0 1  0 0 0 0 1  0 0 0 0 1  0 0 0 0.9 -0.35"/><feComposite in2="SourceGraphic" operator="in"/></filter>
<linearGradient id="p1s" x1="0" y1="0" x2="0.25" y2="1"><stop offset="0" stop-color="#27667a"/><stop offset="0.35" stop-color="#3a8194"/><stop offset="0.65" stop-color="#5b98a8"/><stop offset="0.85" stop-color="#8ab8c3"/><stop offset="1" stop-color="#a6c6cc"/></linearGradient>
<clipPath id="pc"><rect width="207" height="181"/></clipPath></defs>
<g clip-path="url(#pc)">
<rect width="207" height="181" fill="url(#p1s)"/>
<rect width="207" height="140" fill="#fff" filter="url(#ps)" opacity="0.35"/>
<path d="M0 143 L50 138 L110 132 L159 128 L206 129 V181 H0Z" fill="#8a7f60"/>
<path d="M0 160 L60 150 L207 146 V181 H0Z" fill="#7b7257" opacity="0.6"/>
<rect y="125" width="207" height="56" fill="#000" filter="url(#pn)" opacity="0.35"/>
<path d="M0 143 L50 137 L110 129 L159 124 L159 128 L110 132 L50 138 L0 144Z" fill="#3d4a40" opacity="0.8"/>
<path d="M0 141 L30 141 L40 143 L0 145Z" fill="#c98b6a" opacity="0.6"/>
<path d="M158.4 128 L159 110 L161 89.5 L172 80 L179.3 74.5 L183 60 L189.3 51 L198 49 L206 49.5 V130 Z" fill="#1e3521"/>
<path d="M159.2 127.1 L206 129.6 V144.7 L180 136Z" fill="#8c9296"/>
<path d="M92.4 156.4 L97.4 156.4 L96 46 L94 46Z" fill="#3f362e"/>
<path d="M84 41 L114 30 M86 35 L112 25 M90 52 L110 45 M96 20 L101 52 M104 22 L111 38" stroke="#25201d" stroke-width="1.5"/>
<path d="M0 10 L96 73 L145 115 M0 25 L96 82 M96 73 L206 33 M96 75 L206 37 M96 45 L130 0 M96 45 L70 0 M96 50 L40 0" stroke="#1d2528" stroke-width="0.7" fill="none" opacity="0.85"/>
<rect x="100" y="146" width="5.5" height="9" rx="1" fill="#a8bdb3"/>
<path d="M142.5 106 V133 M139.5 110 H146" stroke="#3a3a3a" stroke-width="1"/>
</g></svg>
<div class="a" style="left:1093.9px;top:243.4px;width:24.6px;height:22px;background:#e8c12c;border-radius:2px"></div>
<svg style="left:1098.7px;top:247.4px;" width="15" height="14" viewBox="0 0 15 14"><path d="M7.5 0.8 L9.5 5 L14.1 5.5 L10.6 8.6 L11.6 13.2 L7.5 10.8 L3.4 13.2 L4.4 8.6 L0.9 5.5 L5.5 5Z" fill="#fff" stroke="#fff" stroke-width="0.8" stroke-linejoin="round"/></svg>
<div class="a" style="left:1260.7px;top:243.4px;width:22px;height:22px;background:#e6e8eb;border-radius:2px"></div>
<svg style="left:1260.7px;top:243.4px;" width="22" height="22" viewBox="0 0 22 22"><path d="M11 5 V17 M5 11 H17" stroke="#2b3036" stroke-width="1.8"/></svg>
<div class="a" style="left:1260.7px;top:268px;width:22px;height:22px;background:#e6e8eb;border-radius:2px"></div>
<svg style="left:1260.7px;top:268px;" width="22" height="22" viewBox="0 0 22 22"><path d="M5.5 11 H16.5" stroke="#2b3036" stroke-width="1.8"/></svg>
<div class="a" style="left:1260.7px;top:299px;width:22px;height:22px;background:#e6e8eb;border-radius:2px"></div>
<svg style="left:1260.7px;top:299px;" width="22" height="22" viewBox="0 0 22 22"><path d="M6.5 12 V8.5 a1 1 0 0 1 2 0 V11 V6 a1 1 0 0 1 2 0 V10.5 V5.2 a1 1 0 0 1 2 0 V10.5 V6.2 a1 1 0 0 1 2 0 V12.5 L15.5 10.8 a1 1 0 0 1 1.6 1.1 L14.5 16.5 Q13.5 18 11.5 18 H10 Q7.5 18 6.8 15.5Z" fill="#2b3036"/></svg>
<svg style="left:1084.5px;top:424.2px" width="207" height="181" viewBox="0 0 207 181"><defs><filter id="ps" x="0" y="0" width="100%" height="100%"><feTurbulence type="fractalNoise" baseFrequency="0.012 0.09" numOctaves="2" seed="11"/><feColorMatrix values="0 0 0 0 1  0 0 0 0 1  0 0 0 0 1  0 0 0 0.9 -0.35"/><feComposite in2="SourceGraphic" operator="in"/></filter>
<linearGradient id="p2s" x1="0" y1="0" x2="1" y2="0.3"><stop offset="0" stop-color="#8c9aa6"/><stop offset="0.4" stop-color="#6b7a86"/><stop offset="0.75" stop-color="#4c5a66"/><stop offset="1" stop-color="#40505c"/></linearGradient>
<radialGradient id="p2p" cx="0.08" cy="0.45" r="0.3"><stop offset="0" stop-color="#e4dce2"/><stop offset="0.6" stop-color="#c8c9d0" stop-opacity="0.7"/><stop offset="1" stop-color="#c8c9d0" stop-opacity="0"/></radialGradient>
<linearGradient id="p2h" x1="0" y1="0" x2="0" y2="1"><stop offset="0" stop-color="#6d8290" stop-opacity="0"/><stop offset="1" stop-color="#6d8290" stop-opacity="0.8"/></linearGradient>
<clipPath id="pc2"><rect width="207" height="181"/></clipPath></defs>
<g clip-path="url(#pc2)">
<rect width="207" height="181" fill="url(#p2s)"/>
<rect x="100" y="60" width="107" height="60" fill="url(#p2h)"/>
<rect width="207" height="181" fill="url(#p2p)"/>
<rect width="207" height="130" fill="#fff" filter="url(#ps)" opacity="0.25"/>
<path d="M0 141 V84 Q3 76 10 76 Q18 77 20 86 Q22 96 18 104 L21 120 L29 118 Q28 100 34 92 Q42 85 52 86 Q66 86 72 95 Q78 104 72 114 L76 120 L96 112 Q100 104 112 106 Q125 101 140 104 Q160 100 175 106 Q185 110 188 118 L188 128 L30 140 Z" fill="#2c3a2d"/>
<path d="M14 100 Q10 120 12 141 L22 141 Q20 120 18 104Z" fill="#253226"/>
<path d="M29 121 L112 118 L112 127 L29 134Z" fill="#5f6f78" opacity="0.9"/>
<path d="M29 128 L112 124 L112 132 L29 136Z" fill="#6a4a3e"/>
<path d="M0 146 L80 137 L162 124.4 L188 118 L206 116 V181 H0Z" fill="#7b7856"/>
<path d="M0 143 L80 134.5 L162.5 124.4 L162.5 126.4 L80 136.5 L0 145.5Z" fill="#b4b9bc"/>
<path d="M0 160 Q50 146 110 148 Q150 152 178 165 L195 181 H0Z" fill="#78756d"/>
<g fill="#94908a"><path d="M2 170 L14 164 L24 168 L22 177 L4 178Z"/><path d="M30 162 L42 158 L48 165 L36 170Z"/><path d="M52 170 L64 166 L72 172 L66 180 L54 179Z"/><path d="M86 160 L98 156 L104 166 L90 170Z"/><path d="M112 170 L126 166 L132 174 L118 180Z"/><path d="M140 166 L152 164 L158 172 L146 176Z"/><path d="M74 152 L84 150 L88 157 L78 159Z"/><path d="M106 152 L116 150 L120 157 L110 158Z"/><path d="M22 153 L34 151 L36 158 L24 159Z"/><path d="M128 156 L138 155 L142 162 L130 162Z"/></g>
<path d="M90 44 L93.5 44 L111.5 134.5 L107 134.5Z" fill="#2c2a28"/>
<path d="M79 55 L102 41 M82 60 L104 47 M86 66 L101 58 M93 42 L100 62" stroke="#25201d" stroke-width="1.5"/>
<path d="M0 25 L90 65 L160 105 M0 32 L92 70 M15 0 L91 55 M60 0 L95 48 M92 62 L170 110 M92 75 L70 100" stroke="#1d2528" stroke-width="0.8" fill="none" opacity="0.85"/>
<path d="M0 25 L15 30" stroke="#1d2528" stroke-width="2"/>
<path d="M84 109 L73 135 M123 112 L140 148" stroke="#c9a86a" stroke-width="1"/>
<rect x="102" y="124" width="4" height="8" fill="#6fa0b0"/>
</g></svg>
<div class="a" style="left:1093.9px;top:433.59999999999997px;width:24.6px;height:22px;background:#e4e6e9;border-radius:2px"></div>
<svg style="left:1098.7px;top:437.59999999999997px;" width="15" height="14" viewBox="0 0 15 14"><path d="M7.5 0.8 L9.5 5 L14.1 5.5 L10.6 8.6 L11.6 13.2 L7.5 10.8 L3.4 13.2 L4.4 8.6 L0.9 5.5 L5.5 5Z" fill="#7b8590" stroke="#7b8590" stroke-width="0.8" stroke-linejoin="round"/></svg>
<div class="a" style="left:1260.7px;top:433.59999999999997px;width:22px;height:22px;background:#e6e8eb;border-radius:2px"></div>
<svg style="left:1260.7px;top:433.59999999999997px;" width="22" height="22" viewBox="0 0 22 22"><path d="M11 5 V17 M5 11 H17" stroke="#2b3036" stroke-width="1.8"/></svg>
<div class="a" style="left:1260.7px;top:458.2px;width:22px;height:22px;background:#e6e8eb;border-radius:2px"></div>
<svg style="left:1260.7px;top:458.2px;" width="22" height="22" viewBox="0 0 22 22"><path d="M5.5 11 H16.5" stroke="#2b3036" stroke-width="1.8"/></svg>
<div class="a" style="left:1260.7px;top:489.2px;width:22px;height:22px;background:#e6e8eb;border-radius:2px"></div>
<svg style="left:1260.7px;top:489.2px;" width="22" height="22" viewBox="0 0 22 22"><path d="M6.5 12 V8.5 a1 1 0 0 1 2 0 V11 V6 a1 1 0 0 1 2 0 V10.5 V5.2 a1 1 0 0 1 2 0 V10.5 V6.2 a1 1 0 0 1 2 0 V12.5 L15.5 10.8 a1 1 0 0 1 1.6 1.1 L14.5 16.5 Q13.5 18 11.5 18 H10 Q7.5 18 6.8 15.5Z" fill="#2b3036"/></svg>
<svg style="left:1084.5px;top:613.6px" width="207" height="181" viewBox="0 0 207 181"><defs><filter id="pn" x="0" y="0" width="100%" height="100%"><feTurbulence type="fractalNoise" baseFrequency="0.7" numOctaves="2" seed="5"/><feColorMatrix values="0 0 0 0 0  0 0 0 0 0  0 0 0 0 0  0 0 0 0.7 -0.2"/><feComposite in2="SourceGraphic" operator="in"/></filter><filter id="ps" x="0" y="0" width="100%" height="100%"><feTurbulence type="fractalNoise" baseFrequency="0.012 0.09" numOctaves="2" seed="11"/><feColorMatrix values="0 0 0 0 1  0 0 0 0 1  0 0 0 0 1  0 0 0 0.9 -0.35"/><feComposite in2="SourceGraphic" operator="in"/></filter>
<linearGradient id="p3s" x1="0" y1="0" x2="1" y2="0.5"><stop offset="0" stop-color="#2b6d80"/><stop offset="0.45" stop-color="#4f8797"/><stop offset="1" stop-color="#9ab6c2"/></linearGradient>
<linearGradient id="p3h" x1="0" y1="0" x2="0" y2="1"><stop offset="0" stop-color="#c3cbce" stop-opacity="0"/><stop offset="1" stop-color="#c3cbce" stop-opacity="0.9"/></linearGradient>
<clipPath id="pc3"><rect width="207" height="181"/></clipPath></defs>
<g clip-path="url(#pc3)">
<rect width="207" height="181" fill="url(#p3s)"/>
<rect width="207" height="150" fill="#fff" filter="url(#ps)" opacity="0.3"/>
<rect y="110" width="110" height="38" fill="url(#p3h)"/>
<path d="M0 141.7 L100 141.7 L100 151 L0 151Z" fill="#2a3a2c"/>
<path d="M0 150 L100 150 L207 160 V181 H0Z" fill="#8c8262"/>
<rect y="148" width="207" height="33" fill="#000" filter="url(#pn)" opacity="0.3"/>
<path d="M100.7 150 L108 128 L115.8 116.7 L130 108 L142.5 100 L152 92 L162.6 90 L180 86 L206 86.6 V166.8 L140 158 L100 152Z" fill="#1f3522"/>
<path d="M99 152.6 L206 168.5 V180 L180 181 L150 168Z" fill="#8b9094"/>
<path d="M41 171.8 L46.5 171.8 L86 51.5 L82 51.5Z" fill="#3a322c"/>
<path d="M70.7 33 L105.8 36 M73 38 L100 41 M80 26.5 V50 M92 28 V45 M103 27 V50" stroke="#25201d" stroke-width="1.6"/>
<path d="M34 0 L93 170 M45 0 L84 75 M84 75 L206 90 M84 77 L206 94 M0 90 L84 60 M15 181 L80 75 M88 0 L90 60 M98 0 L92 60" stroke="#1d2528" stroke-width="0.8" fill="none" opacity="0.8"/>
<rect x="54" y="163" width="6.5" height="10" rx="1" fill="#a8bdb3"/>
<path d="M92 125 V165 M89 130 H96" stroke="#3a3a3a" stroke-width="1"/>
</g></svg>
<div class="a" style="left:1093.9px;top:623.0px;width:24.6px;height:22px;background:#e4e6e9;border-radius:2px"></div>
<svg style="left:1098.7px;top:627.0px;" width="15" height="14" viewBox="0 0 15 14"><path d="M7.5 0.8 L9.5 5 L14.1 5.5 L10.6 8.6 L11.6 13.2 L7.5 10.8 L3.4 13.2 L4.4 8.6 L0.9 5.5 L5.5 5Z" fill="#7b8590" stroke="#7b8590" stroke-width="0.8" stroke-linejoin="round"/></svg>
<div class="a" style="left:1260.7px;top:623.0px;width:22px;height:22px;background:#e6e8eb;border-radius:2px"></div>
<svg style="left:1260.7px;top:623.0px;" width="22" height="22" viewBox="0 0 22 22"><path d="M11 5 V17 M5 11 H17" stroke="#2b3036" stroke-width="1.8"/></svg>
<div class="a" style="left:1260.7px;top:647.6px;width:22px;height:22px;background:#e6e8eb;border-radius:2px"></div>
<svg style="left:1260.7px;top:647.6px;" width="22" height="22" viewBox="0 0 22 22"><path d="M5.5 11 H16.5" stroke="#2b3036" stroke-width="1.8"/></svg>
<div class="a" style="left:1260.7px;top:678.6px;width:22px;height:22px;background:#e6e8eb;border-radius:2px"></div>
<svg style="left:1260.7px;top:678.6px;" width="22" height="22" viewBox="0 0 22 22"><path d="M6.5 12 V8.5 a1 1 0 0 1 2 0 V11 V6 a1 1 0 0 1 2 0 V10.5 V5.2 a1 1 0 0 1 2 0 V10.5 V6.2 a1 1 0 0 1 2 0 V12.5 L15.5 10.8 a1 1 0 0 1 1.6 1.1 L14.5 16.5 Q13.5 18 11.5 18 H10 Q7.5 18 6.8 15.5Z" fill="#2b3036"/></svg>
<svg style="left:588px;top:883px" width="721" height="254" viewBox="588 883 721 254"><defs><clipPath id="mc"><rect x="588" y="883" width="721" height="254"/></clipPath></defs>
<g clip-path="url(#mc)">
<rect x="588" y="883" width="721" height="254" fill="#ebe6e2"/>
<polygon points="808.3,966 840,964 912.3,937.6 911.2,882 1131.3,882 1131.3,891.3 1098.4,889 1065.6,910.5 1068,977.5 808.3,978.5" fill="#aadfa0"/>
<polygon points="588,1006.6 628.7,1007 671.6,1024.6 667,1065.3 622,1076.6 588,1073.2" fill="#aadfa0"/>
<polygon points="655.8,1137 658,1124 701,1092.4 697.6,1137" fill="#aadfa0"/>
<g fill="#ddd3cf">
<rect x="967.2" y="884.5" width="19.3" height="17"/><rect x="1028.3" y="897" width="19.2" height="12.4"/><rect x="1030.6" y="932" width="17" height="17"/><circle cx="961.6" cy="940" r="3"/>
<rect x="1074.7" y="910.5" width="18.1" height="24.9"/>
<path d="M1158.4 886.8 H1170 V898 H1183.3 V923 H1168 V913 H1158.4Z"/>
<path d="M1165 934.3 H1184.4 V963.7 H1172 V957 H1165Z"/>
<rect x="1239.9" y="889" width="14.7" height="30.6"/>
<path d="M1241 933 H1258 V947 H1280.6 V955.8 H1241Z"/>
<rect x="650" y="1095.8" width="11.4" height="11.2"/>
<rect x="1195.7" y="1021.4" width="19.3" height="31.6" transform="rotate(-4 1205 1037)"/>
<rect x="1218.4" y="1023.7" width="16.9" height="29.3"/>
<rect x="1238.7" y="1022.5" width="17" height="31.7"/>
<rect x="1259" y="1024.8" width="16" height="28.2"/>
<rect x="1278" y="1023.7" width="18.4" height="29.3"/>
<rect x="1298.7" y="1024.8" width="12" height="28.2"/>
<rect x="1168" y="1040" width="25" height="19" transform="rotate(38 1180.5 1049.7)"/>
<rect x="1150.6" y="1060" width="30" height="20" transform="rotate(22 1165.6 1070)"/>
<rect x="1147.7" y="1082.4" width="26" height="17" transform="rotate(16 1160.7 1090.9)"/>
<rect x="1136" y="1104.5" width="31" height="19" transform="rotate(5 1151.6 1114)"/>
<rect x="1150" y="1130" width="22" height="12" transform="rotate(-20 1161 1136)"/>
<rect x="1237.6" y="1104" width="18.1" height="27"/>
<path d="M1261.3 1106 H1270 V1104 H1278.3 V1127.7 H1261.3Z"/>
<rect x="1282.8" y="1104" width="17" height="27"/>
</g>
<g fill="none" stroke="#fff" stroke-linecap="butt">
<path d="M640 882 Q641 915 648 930 L704 990" stroke-width="4.5"/>
<path d="M801.6 882 V980" stroke-width="4"/>
<path d="M1213.8 882 V978" stroke-width="9"/>
<path d="M718 985.8 L1150 980.5 L1310 978.8" stroke-width="11.5"/>
<path d="M718 985.8 Q700 987 696 1005 L675 1137" stroke-width="11"/>
<path d="M1310 1083.5 H1222 Q1203 1083.5 1202 1100 V1119" stroke-width="9"/>
</g>
<circle cx="1201.8" cy="1119.8" r="9.7" fill="#fff"/>
<g stroke="#7fb5f2" stroke-width="1.3" fill="none">
<path d="M588 1036.4 L648 1037 L920.2 1137"/>
<path d="M1147 1004.4 L1310 1005"/>
<path d="M1141.4 1005.6 L1083.7 1137"/>
</g>
<path d="M684.5 1002 L714.6 997.5 L1142 996.5" stroke="#b7bec6" stroke-width="3.2" fill="none"/>
<circle cx="684.5" cy="1002" r="8.7" fill="#7b8791"/><circle cx="730" cy="999" r="8.7" fill="#7b8791"/><circle cx="819.6" cy="996.8" r="8.7" fill="#7b8791"/><circle cx="910" cy="996.8" r="8.7" fill="#7b8791"/><circle cx="999.6" cy="996.5" r="8.7" fill="#7b8791"/><circle cx="1090" cy="996.5" r="8.7" fill="#7b8791"/><circle cx="1142.1" cy="996.5" r="8.7" fill="#d9ae1f"/><text x="871" y="987.3" font-family="Liberation Sans" font-size="10" fill="#2b3036" textLength="57" lengthAdjust="spacingAndGlyphs">Needham Rd</text><text x="1245.5" y="982.3" font-family="Liberation Sans" font-size="10" fill="#2b3036" textLength="56.5" lengthAdjust="spacingAndGlyphs">Needham Rd</text><text transform="translate(1216.8 901) rotate(-90)" font-family="Liberation Sans" font-size="10.7" fill="#2b3036">NW</text><rect x="1278.3" y="892.4" width="21.5" height="20.5" rx="2" fill="#d4dadf"/><path d="M1289 897 V908.5 M1283.2 902.7 H1294.8" stroke="#2b3036" stroke-width="1.8"/><rect x="1278.3" y="916.2" width="21.5" height="20.5" rx="2" fill="#d4dadf"/><path d="M1283.2 927 H1294.8" stroke="#2b3036" stroke-width="1.8"/><rect x="1278.3" y="947.9" width="21.5" height="20.5" rx="2" fill="#d4dadf"/><path d="M1284.5 959 V955 a1 1 0 0 1 2 0 V957 V952.5 a1 1 0 0 1 2 0 V957 V951.8 a1 1 0 0 1 2 0 V957 V952.8 a1 1 0 0 1 2 0 V959.5 L1294 957.8 a1 1 0 0 1 1.6 1.1 L1293 963.5 Q1292 965 1290 965 H1288.5 Q1285.6 965 1285 962.5Z" fill="#2b3036"/></g></svg>
</body></html>
